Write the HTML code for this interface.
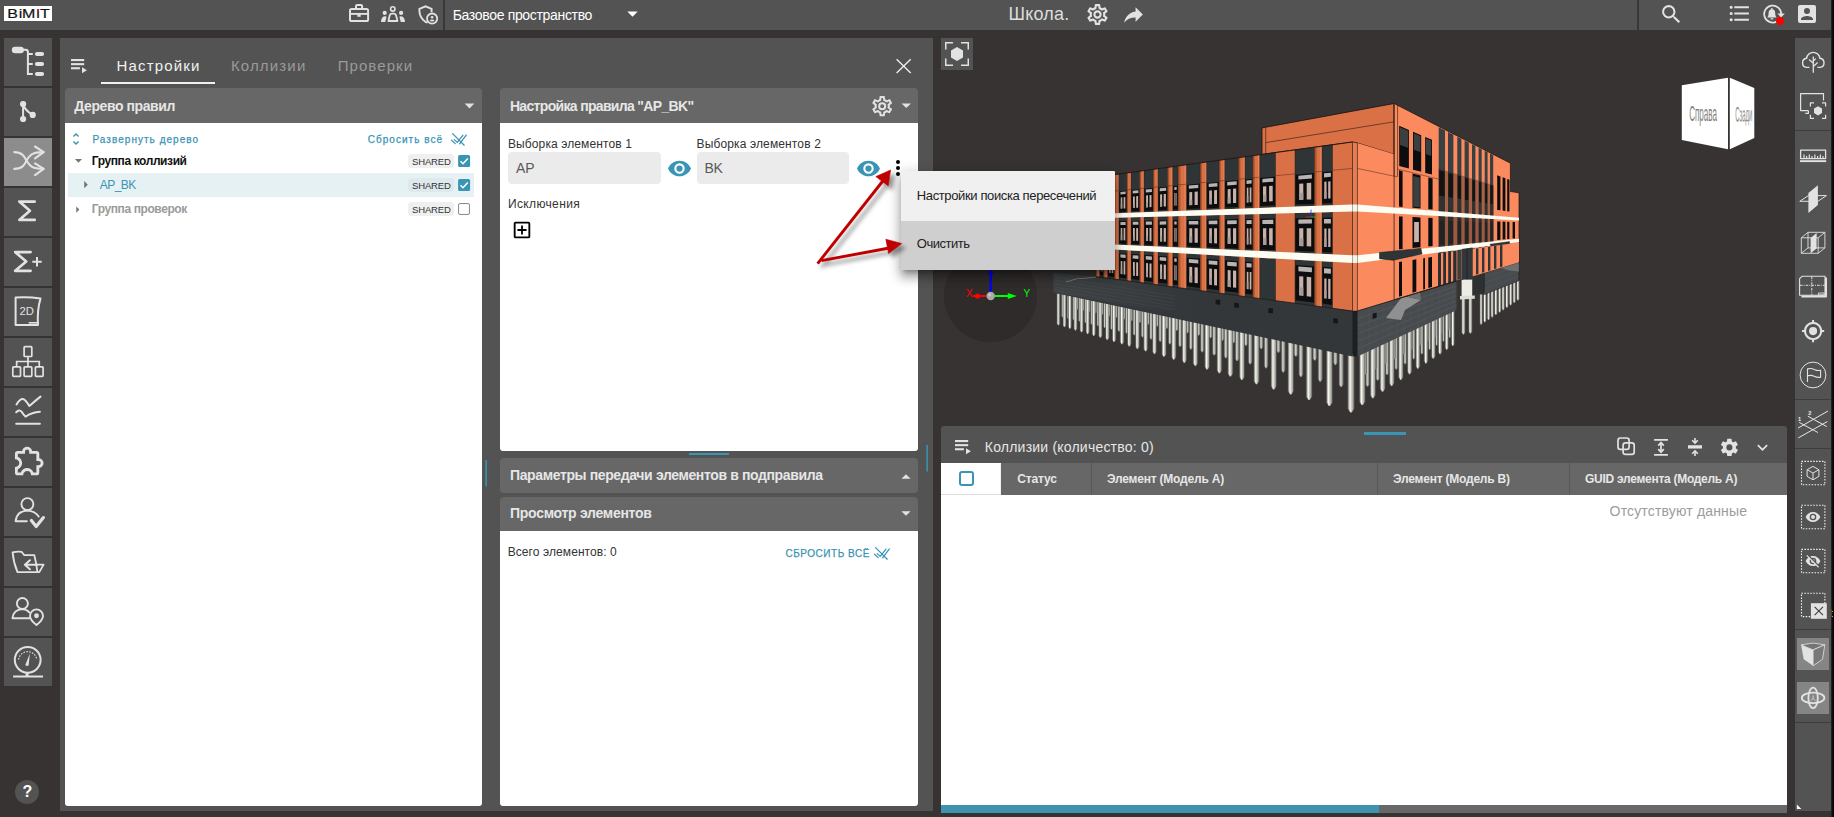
<!DOCTYPE html>
<html lang="ru"><head><meta charset="utf-8"><title>BIMIT</title>
<style>
html,body{margin:0;padding:0;overflow:hidden}
body{width:1834px;height:817px;overflow:hidden;background:#373333;position:relative;
font-family:"Liberation Sans",sans-serif;}
.t{position:absolute;white-space:pre;line-height:1}
.i{position:absolute;display:block;overflow:visible}
</style></head><body>
<div style="position:absolute;left:0px;top:0px;width:1831px;height:30px;background:#535353;"></div>
<div style="position:absolute;left:443px;top:0px;width:2px;height:30px;background:#3b3737;"></div>
<div style="position:absolute;left:1637px;top:0px;width:2px;height:30px;background:#3b3737;"></div>
<div style="position:absolute;left:4px;top:6px;width:48px;height:15px;background:#ffffff;"></div>
<svg class="i" style="left:4px;top:6px" width="48" height="15" viewBox="4 6 48 15"><g transform="scale(1.27,1)"><text x="5.62 14.87 17.35 28.65 31.59" y="18.2" font-size="12.6" font-weight="400" fill="#141414" stroke="#141414" stroke-width="0.2" font-family="Liberation Sans, sans-serif">BiMiT</text></g></svg>
<div style="position:absolute;left:37.0px;top:8.7px;width:2.4px;height:2.2px;background:#ff1010;"></div>
<svg class="i" style="left:346px;top:2px" width="26" height="23" viewBox="346 2 26 23" fill="none" stroke="#e2e2e2" stroke-width="2">
<rect x="350" y="9.1" width="18.1" height="12" rx="1.7"/><path d="M356,8.6 V6.3 Q356,5.1 357.2,5.1 H360.9 Q362.1,5.1 362.1,6.3 V8.6"/>
<path d="M350,13.9 H368.1" stroke-width="1.9"/><rect x="357.4" y="14.1" width="3.3" height="2.7" fill="#e2e2e2" stroke="none"/></svg>
<svg class="i" style="left:379px;top:4px" width="28" height="20" viewBox="379 4 28 20" fill="#e2e2e2" stroke="none">
<circle cx="392.8" cy="8.9" r="2.2" fill="none" stroke="#e2e2e2" stroke-width="1.6"/>
<path d="M388.4,21 L389.7,15.4 Q390.3,13.7 392,13.7 H393.8 Q395.5,13.7 396.1,15.4 L397.5,21 Z" fill="none" stroke="#e2e2e2" stroke-width="1.8" stroke-linejoin="round"/>
<circle cx="384.7" cy="12.9" r="2.1"/><circle cx="401.1" cy="12.9" r="2.1"/>
<path d="M381,21.9 Q381.2,16.2 385.4,16.2 Q386.8,16.2 386.4,17.4 L385.2,21.9 Z"/>
<path d="M405,21.9 Q404.8,16.2 400.4,16.2 Q399.2,16.2 399.6,17.4 L400.8,21.9 Z"/></svg>
<svg class="i" style="left:415px;top:3px" width="26" height="24" viewBox="415 3 26 24" fill="none" stroke="#e2e2e2" stroke-width="1.9">
<path d="M427.6,22.3 Q426.6,22.4 425.4,21.8 Q419.4,17.8 419.4,10.6 V8.9 L425.6,6.3 L431.6,8.9 V12.2"/>
<circle cx="432.1" cy="18.6" r="5.1" stroke-width="1.8"/>
<circle cx="432.1" cy="17.2" r="1.3" fill="#e2e2e2" stroke="none"/><ellipse cx="432.1" cy="20.5" rx="2.2" ry="0.9" fill="#e2e2e2" stroke="none"/></svg>
<svg class="i" style="left:620.2px;top:0.6px" width="25" height="25" viewBox="0 0 24 24" fill="#ffffff" ><path d="M7,10L12,15L17,10H7Z"/></svg>
<svg class="i" style="left:1085px;top:1.6px" width="25" height="25" viewBox="0 0 24 24" fill="#e2e2e2" ><path d="M12,8A4,4 0 0,1 16,12A4,4 0 0,1 12,16A4,4 0 0,1 8,12A4,4 0 0,1 12,8M12,10A2,2 0 0,0 10,12A2,2 0 0,0 12,14A2,2 0 0,0 14,12A2,2 0 0,0 12,10M10,22C9.75,22 9.54,21.82 9.5,21.58L9.13,18.93C8.5,18.68 7.96,18.34 7.44,17.94L4.95,18.95C4.73,19.03 4.46,18.95 4.34,18.73L2.34,15.27C2.21,15.05 2.27,14.78 2.46,14.63L4.57,12.97L4.5,12L4.57,11L2.46,9.37C2.27,9.22 2.21,8.95 2.34,8.73L4.34,5.27C4.46,5.05 4.73,4.96 4.95,5.05L7.44,6.05C7.96,5.66 8.5,5.32 9.13,5.07L9.5,2.42C9.54,2.18 9.75,2 10,2H14C14.25,2 14.46,2.18 14.5,2.42L14.87,5.07C15.5,5.32 16.04,5.66 16.56,6.05L19.05,5.05C19.27,4.96 19.54,5.05 19.66,5.27L21.66,8.73C21.79,8.95 21.73,9.22 21.54,9.37L19.43,11L19.5,12L19.43,13L21.54,14.63C21.73,14.78 21.79,15.05 21.66,15.27L19.66,18.73C19.54,18.95 19.27,19.04 19.05,18.95L16.56,17.95C16.04,18.34 15.5,18.68 14.87,18.93L14.5,21.58C14.46,21.82 14.25,22 14,22H10M11.25,4L10.88,6.61C9.68,6.86 8.62,7.5 7.85,8.39L5.44,7.35L4.69,8.65L6.8,10.2C6.4,11.37 6.4,12.64 6.8,13.8L4.68,15.36L5.43,16.66L7.86,15.62C8.63,16.5 9.68,17.14 10.87,17.38L11.24,20H12.76L13.13,17.39C14.32,17.14 15.37,16.5 16.14,15.62L18.57,16.66L19.32,15.36L17.2,13.81C17.6,12.64 17.6,11.37 17.2,10.2L19.31,8.65L18.56,7.35L16.15,8.39C15.38,7.5 14.32,6.86 13.12,6.62L12.75,4H11.25Z"/></svg>
<svg class="i" style="left:1120.9px;top:1.8px" width="25" height="25" viewBox="0 0 24 24" fill="#e2e2e2" ><path d="M21,12L14,5V9C7,10 4,15 3,20C5.5,16.5 9,14.9 14,14.9V19L21,12Z"/></svg>
<svg class="i" style="left:1659px;top:2.3px" width="24.7" height="24.7" viewBox="0 0 24 24" fill="#e2e2e2" ><path d="M9.5,3A6.5,6.5 0 0,1 16,9.5C16,11.11 15.41,12.59 14.44,13.73L14.71,14H15.5L20.5,19L19,20.5L14,15.5V14.71L13.73,14.44C12.59,15.41 11.11,16 9.5,16A6.5,6.5 0 0,1 3,9.5A6.5,6.5 0 0,1 9.5,3M9.5,5C7,5 5,7 5,9.5C5,12 7,14 9.5,14C12,14 14,12 14,9.5C14,7 12,5 9.5,5Z"/></svg>
<svg class="i" style="left:1727.1px;top:1.1px" width="25" height="25" viewBox="0 0 24 24" fill="#e2e2e2" ><path d="M7,5H21V7H7V5M7,13V11H21V13H7M4,4.5A1.5,1.5 0 0,1 5.5,6A1.5,1.5 0 0,1 4,7.5A1.5,1.5 0 0,1 2.5,6A1.5,1.5 0 0,1 4,4.5M4,10.5A1.5,1.5 0 0,1 5.5,12A1.5,1.5 0 0,1 4,13.5A1.5,1.5 0 0,1 2.5,12A1.5,1.5 0 0,1 4,10.5M7,19V17H21V19H7M4,16.5A1.5,1.5 0 0,1 5.5,18A1.5,1.5 0 0,1 4,19.5A1.5,1.5 0 0,1 2.5,18A1.5,1.5 0 0,1 4,16.5Z"/></svg>
<svg class="i" style="left:1761px;top:3px" width="26" height="23" viewBox="1761 3 26 23" fill="none" stroke="#e2e2e2" stroke-width="1.8">
<path d="M1781.2,14.1 A8.5,8.5 0 1 0 1776.6,21.6"/>
<path d="M1777.4,13.4 H1784.8 L1781.1,17.6 Z" fill="#e2e2e2" stroke="none"/>
<path d="M1767.2,17.4 Q1768.6,16.2 1768.6,13.2 Q1768.6,9.2 1771.9,9.2 Q1775.2,9.2 1775.2,13.2 Q1775.2,16.2 1776.6,17.4 Z" fill="#e2e2e2" stroke="none"/>
<path d="M1770.6,18.8 H1773.2" stroke-width="1.3"/><circle cx="1771.9" cy="8.8" r="0.9" fill="#e2e2e2" stroke="none"/></svg>
<div style="position:absolute;left:1775.9px;top:16.9px;width:8.2px;height:8.2px;border-radius:50%;background:#ff0000"></div>
<svg class="i" style="left:1795px;top:1.9px" width="24" height="24" viewBox="0 0 24 24" fill="#e2e2e2" ><path d="M6,17C6,15 10,13.9 12,13.9C14,13.9 18,15 18,17V18H6M15,9A3,3 0 0,1 12,12A3,3 0 0,1 9,9A3,3 0 0,1 12,6A3,3 0 0,1 15,9M3,5V19A2,2 0 0,0 5,21H19A2,2 0 0,0 21,19V5A2,2 0 0,0 19,3H5C3.89,3 3,3.9 3,5Z"/></svg>
<div style="position:absolute;left:4px;top:38px;width:48px;height:48px;background:#535353"><svg width="48" height="48" viewBox="0 0 48 48" style="display:block"><rect x="7.8" y="8.8" width="12.1" height="6.4" rx="3.2" fill="#e2e2e2"/>
<path d="M19,11.8 H21.6 Q23.9,11.8 23.9,14.2 V36 H28.8 M23.9,16 H28.8 M23.9,26 H28.8" fill="none" stroke="#e2e2e2" stroke-width="2"/>
<rect x="30.9" y="14" width="9.2" height="4.1" rx="2.05" fill="#e2e2e2"/><rect x="30.9" y="24" width="9.2" height="4.1" rx="2.05" fill="#e2e2e2"/><rect x="30.9" y="34" width="9.2" height="4.1" rx="2.05" fill="#e2e2e2"/></svg></div>
<div style="position:absolute;left:4px;top:88px;width:48px;height:48px;background:#535353"><svg width="48" height="48" viewBox="0 0 48 48" style="display:block"><circle cx="19.1" cy="16.1" r="3.1" fill="#e2e2e2"/><circle cx="19.1" cy="31" r="3.1" fill="#e2e2e2"/><circle cx="28.7" cy="26.9" r="3.1" fill="#e2e2e2"/>
<path d="M19.1,16.1 V31 M19.1,16.1 Q21,22.5 28.7,26.9" fill="none" stroke="#e2e2e2" stroke-width="2"/></svg></div>
<div style="position:absolute;left:4px;top:138px;width:48px;height:48px;background:#8c8c8c"><svg width="48" height="48" viewBox="0 0 48 48" style="display:block"><g fill="none" stroke="#e2e2e2" stroke-width="2.1" stroke-linecap="round" stroke-linejoin="round">
<path d="M10.3,14.1 C20,14.1 21,21 23.4,24 C26,28 28,30.9 39.4,30.9"/>
<path d="M10.3,30.9 C20,30.9 21,25 23.4,21 C26,17 28,14.1 39.4,14.1"/>
<path d="M31,8.5 L39.7,14.1 L31,20.3"/><path d="M31,25.3 L39.7,30.9 L31,37.2"/></g></svg></div>
<div style="position:absolute;left:4px;top:188px;width:48px;height:48px;background:#535353"><svg width="48" height="48" viewBox="0 0 48 48" style="display:block"><path d="M30.7,13.6 H15.3 L25.9,22.8 L15.3,31.9 H30.7" fill="none" stroke="#e2e2e2" stroke-width="2.7" stroke-linecap="round" stroke-linejoin="round"/></svg></div>
<div style="position:absolute;left:4px;top:238px;width:48px;height:48px;background:#535353"><svg width="48" height="48" viewBox="0 0 48 48" style="display:block"><path d="M26.6,14.1 H11.2 L22.2,23.5 L11.2,32.8 H26.6" fill="none" stroke="#e2e2e2" stroke-width="2.7" stroke-linecap="round" stroke-linejoin="round"/>
<path d="M28.3,23.7 H37.7 M33,19 V28.4" fill="none" stroke="#e2e2e2" stroke-width="2"/></svg></div>
<div style="position:absolute;left:4px;top:288px;width:48px;height:48px;background:#535353"><svg width="48" height="48" viewBox="0 0 48 48" style="display:block"><path d="M11.6,9.6 Q24,8.6 36.5,10.6 Q33,22 34,36.9 H11.6 Z" fill="none" stroke="#e2e2e2" stroke-width="2" stroke-linejoin="round"/>
<path d="M24.7,34.8 H33.4" stroke="#e2e2e2" stroke-width="1.6"/>
<text x="15.6" y="26.6" font-size="11.5" fill="#e2e2e2" font-family="Liberation Sans, sans-serif" textLength="14.4" lengthAdjust="spacingAndGlyphs">2D</text></svg></div>
<div style="position:absolute;left:4px;top:338px;width:48px;height:48px;background:#535353"><svg width="48" height="48" viewBox="0 0 48 48" style="display:block"><g fill="none" stroke="#e2e2e2" stroke-width="1.7"><rect x="20.1" y="8.7" width="7.7" height="9.8" rx="0.8"/>
<rect x="8.8" y="28.8" width="7.7" height="9.6" rx="0.8"/><rect x="20.1" y="28.8" width="7.7" height="9.6" rx="0.8"/><rect x="31.4" y="28.8" width="7.7" height="9.6" rx="0.8"/>
<path d="M23.95,18.5 V28.8 M12.65,28.8 V23.5 H35.25 V28.8"/></g></svg></div>
<div style="position:absolute;left:4px;top:388px;width:48px;height:48px;background:#535353"><svg width="48" height="48" viewBox="0 0 48 48" style="display:block"><g fill="none" stroke="#e2e2e2" stroke-width="2" stroke-linecap="round" stroke-linejoin="round">
<path d="M12.5,16.5 Q16.5,10 19.5,11.2 Q22,12.5 25.3,18 Q31,13 36.5,8.6"/>
<path d="M12.2,24.2 Q15.3,21 17.5,23.6 Q19.5,27 21.6,28.6 Q28,24.5 35.9,23.8"/>
<path d="M12.2,35.7 H35.9"/></g></svg></div>
<div style="position:absolute;left:4px;top:438px;width:48px;height:48px;background:#535353"><svg width="48" height="48" viewBox="0 0 48 48" style="display:block"><g transform="translate(8.1,5.8) scale(1.43)"><path d="M22,13.5C22,15.26 20.7,16.72 19,16.96V20A2,2 0 0,1 17,22H13.2V21.7A2.7,2.7 0 0,0 10.5,19C9,19 7.8,20.21 7.8,21.7V22H4A2,2 0 0,1 2,20V16.2H2.3C3.79,16.2 5,15 5,13.5C5,12 3.79,10.8 2.3,10.8H2V7A2,2 0 0,1 4,5H7.04C7.28,3.3 8.74,2 10.5,2C12.26,2 13.72,3.3 13.96,5H17A2,2 0 0,1 19,7V10.04C20.7,10.28 22,11.74 22,13.5M17,15H18.5A1.5,1.5 0 0,0 20,13.5A1.5,1.5 0 0,0 18.5,12H17V7H12V5.5A1.5,1.5 0 0,0 10.5,4A1.5,1.5 0 0,0 9,5.5V7H4V9.12C5.76,9.8 7,11.5 7,13.5C7,15.5 5.75,17.2 4,17.88V20H6.12C6.8,18.25 8.5,17 10.5,17C12.5,17 14.2,18.25 14.88,20H17V15Z" fill="#e2e2e2"/></g></svg></div>
<div style="position:absolute;left:4px;top:488px;width:48px;height:48px;background:#535353"><svg width="48" height="48" viewBox="0 0 48 48" style="display:block"><g fill="none" stroke="#e2e2e2" stroke-width="1.9" stroke-linecap="round" stroke-linejoin="round">
<circle cx="23.4" cy="16.1" r="6"/><path d="M22.8,33.3 H11.6 Q12.6,23 23.4,22.6 Q31,22.8 34.7,28.6"/>
<path d="M27.4,32.4 L32.2,38.6 L39.4,29.6" stroke-width="3.2"/></g></svg></div>
<div style="position:absolute;left:4px;top:538px;width:48px;height:48px;background:#535353"><svg width="48" height="48" viewBox="0 0 48 48" style="display:block"><g fill="none" stroke="#e2e2e2" stroke-width="1.8" stroke-linecap="round" stroke-linejoin="round">
<path d="M8.6,14.3 Q13,13.4 17.6,13.8 L20.3,17.2 H30.3 Q32.4,25 33.4,34.1 H13.5 Q9.6,25 8.6,14.3 Z"/>
<path d="M31.3,26.6 H39.6 L35.3,34.1 H33.4"/>
<path d="M33.2,26.8 H21.2 M25.9,22.2 L20.9,26.8 L25.9,31.3" stroke-width="2"/></g></svg></div>
<div style="position:absolute;left:4px;top:588px;width:48px;height:48px;background:#535353"><svg width="48" height="48" viewBox="0 0 48 48" style="display:block"><g fill="none" stroke="#e2e2e2" stroke-width="1.9" stroke-linecap="round" stroke-linejoin="round">
<circle cx="18.4" cy="15.5" r="5.5"/><path d="M25.6,30.2 H8.5 Q9.4,21.5 18.4,21.1 Q22.6,21.2 25.3,24.4"/>
<path d="M32.5,37.1 Q26,31.6 26,27.9 A6.5,6.5 0 0 1 39,27.9 Q39,31.6 32.5,37.1 Z"/><circle cx="32.5" cy="27.7" r="1.5" fill="#e2e2e2"/></g></svg></div>
<div style="position:absolute;left:4px;top:638px;width:48px;height:48px;background:#535353"><svg width="48" height="48" viewBox="0 0 48 48" style="display:block"><g fill="none" stroke="#e2e2e2" stroke-width="2">
<circle cx="23.7" cy="21.8" r="12.9"/><path d="M9.1,38.6 H39 M23.1,34.7 V38.6" /><path d="M23.1,34.6 V38.6" stroke-width="3"/>
<path d="M14.6,21.5 A9.2,9.2 0 0 1 32.8,21.5" stroke-width="1.1" stroke-dasharray="1.6 1.3"/>
<path d="M25.9,15.6 L24.6,27.4 Q22.8,28.6 21.3,26.9 Z" fill="#e2e2e2" stroke="none"/></g></svg></div>
<div style="position:absolute;left:15px;top:779.5px;width:24px;height:24px;border-radius:50%;background:#535353"></div>
<span class="t" style="left:22.4px;top:783.5px;font-size:16px;font-weight:700;color:#ffffff">?</span>
<div style="position:absolute;left:60px;top:38px;width:873px;height:773px;background:#535353;"></div>
<svg class="i" style="left:71px;top:58.9px" width="17" height="15" viewBox="0 0 17 15" fill="#e2e2e2"><rect x="0" y="0" width="13.2" height="2.1"/><rect x="0" y="4.1" width="13.2" height="2.1"/><rect x="0" y="8.2" width="8.9" height="2.1"/><path d="M11,8.3 L15.9,11.3 L11,14.2 Z"/></svg>
<div style="position:absolute;left:101px;top:82px;width:114px;height:2px;background:#f0f0f0;"></div>
<svg class="i" style="left:894px;top:57px" width="19" height="18" viewBox="894 57 19 18" fill="none" stroke="#efefef" stroke-width="1.35"><path d="M896.6,59.3 L910.7,72.9 M910.7,59.3 L896.6,72.9"/></svg>
<div style="position:absolute;left:65px;top:88px;width:417px;height:35px;background:#676767;border-radius:4px 4px 0 0"></div>
<div style="position:absolute;left:65px;top:123px;width:417px;height:683px;background:#ffffff;border-radius:0 0 3px 3px"></div>
<svg class="i" style="left:458.3px;top:93.6px" width="23" height="23" viewBox="0 0 24 24" fill="#e2e2e2" ><path d="M7,10L12,15L17,10H7Z"/></svg>
<svg class="i" style="left:67.6px;top:131.2px" width="16" height="16" viewBox="0 0 24 24" fill="#3a94b3" ><path d="M12,18.17L8.83,15L7.41,16.41L12,21L16.59,16.41L15.17,15M12,5.83L15.17,9L16.58,7.59L12,3L7.41,7.59L8.83,9L12,5.83Z"/></svg>
<svg class="i" style="left:450.6px;top:132.8px" width="16" height="13" viewBox="0 0 16 13" fill="none" stroke="#3a94b3" stroke-width="1.25" stroke-linecap="round"><path d="M0.6,7.2 L4.2,10.6 M3.3,6.6 L6.2,9.4 M8.6,10.8 L15.2,2 M6.4,9.2 L12,2.2"/><path d="M1.6,0.6 L13.2,12.2"/></svg>
<div style="position:absolute;left:68px;top:173px;width:406px;height:24px;background:#e6f1f4;"></div>
<svg class="i" style="left:69.6px;top:152.4px" width="17" height="17" viewBox="0 0 24 24" fill="#757575" ><path d="M7,10L12,15L17,10H7Z"/></svg>
<svg class="i" style="left:77.1px;top:176.4px" width="17.3" height="17.3" viewBox="0 0 24 24" fill="#757575" ><path d="M10,17L15,12L10,7V17Z"/></svg>
<svg class="i" style="left:70.3px;top:201.6px" width="15" height="15" viewBox="0 0 24 24" fill="#757575" ><path d="M10,17L15,12L10,7V17Z"/></svg>
<div style="position:absolute;left:408px;top:154px;width:46px;height:14px;background:#efefef;border-radius:4px"></div>
<div style="position:absolute;left:408px;top:178px;width:46px;height:14px;background:#dde9ec;border-radius:4px"></div>
<div style="position:absolute;left:408px;top:202px;width:46px;height:14px;background:#efefef;border-radius:4px"></div>
<svg class="i" style="left:458.3px;top:155px" width="12.2" height="12" viewBox="0 0 12 12"><rect width="12" height="12" rx="1.6" fill="#3a94b3"/><path d="M2.4,6.2 L4.9,8.7 L9.7,3.4" fill="none" stroke="#fff" stroke-width="1.5"/></svg>
<svg class="i" style="left:458.3px;top:179px" width="12.2" height="12" viewBox="0 0 12 12"><rect width="12" height="12" rx="1.6" fill="#3a94b3"/><path d="M2.4,6.2 L4.9,8.7 L9.7,3.4" fill="none" stroke="#fff" stroke-width="1.5"/></svg>
<div style="position:absolute;left:458.3px;top:203px;width:10.2px;height:10px;background:#ffffff;border:1px solid #8f8f8f;border-radius:2px;box-shadow:inset 0 0 1px #bbb"></div>
<div style="position:absolute;left:500px;top:88px;width:418px;height:35px;background:#676767;border-radius:4px 4px 0 0"></div>
<div style="position:absolute;left:500px;top:123px;width:418px;height:328px;background:#ffffff;border-radius:0 0 3px 3px"></div>
<svg class="i" style="left:870px;top:94px" width="24.4" height="24.4" viewBox="0 0 24 24" fill="#e2e2e2" ><path d="M12,8A4,4 0 0,1 16,12A4,4 0 0,1 12,16A4,4 0 0,1 8,12A4,4 0 0,1 12,8M12,10A2,2 0 0,0 10,12A2,2 0 0,0 12,14A2,2 0 0,0 14,12A2,2 0 0,0 12,10M10,22C9.75,22 9.54,21.82 9.5,21.58L9.13,18.93C8.5,18.68 7.96,18.34 7.44,17.94L4.95,18.95C4.73,19.03 4.46,18.95 4.34,18.73L2.34,15.27C2.21,15.05 2.27,14.78 2.46,14.63L4.57,12.97L4.5,12L4.57,11L2.46,9.37C2.27,9.22 2.21,8.95 2.34,8.73L4.34,5.27C4.46,5.05 4.73,4.96 4.95,5.05L7.44,6.05C7.96,5.66 8.5,5.32 9.13,5.07L9.5,2.42C9.54,2.18 9.75,2 10,2H14C14.25,2 14.46,2.18 14.5,2.42L14.87,5.07C15.5,5.32 16.04,5.66 16.56,6.05L19.05,5.05C19.27,4.96 19.54,5.05 19.66,5.27L21.66,8.73C21.79,8.95 21.73,9.22 21.54,9.37L19.43,11L19.5,12L19.43,13L21.54,14.63C21.73,14.78 21.79,15.05 21.66,15.27L19.66,18.73C19.54,18.95 19.27,19.04 19.05,18.95L16.56,17.95C16.04,18.34 15.5,18.68 14.87,18.93L14.5,21.58C14.46,21.82 14.25,22 14,22H10M11.25,4L10.88,6.61C9.68,6.86 8.62,7.5 7.85,8.39L5.44,7.35L4.69,8.65L6.8,10.2C6.4,11.37 6.4,12.64 6.8,13.8L4.68,15.36L5.43,16.66L7.86,15.62C8.63,16.5 9.68,17.14 10.87,17.38L11.24,20H12.76L13.13,17.39C14.32,17.14 15.37,16.5 16.14,15.62L18.57,16.66L19.32,15.36L17.2,13.81C17.6,12.64 17.6,11.37 17.2,10.2L19.31,8.65L18.56,7.35L16.15,8.39C15.38,7.5 14.32,6.86 13.12,6.62L12.75,4H11.25Z"/></svg>
<svg class="i" style="left:894.9px;top:93.8px" width="22.6" height="22.6" viewBox="0 0 24 24" fill="#e2e2e2" ><path d="M7,10L12,15L17,10H7Z"/></svg>
<div style="position:absolute;left:508px;top:152px;width:153px;height:32px;background:#ebebeb;border-radius:4px"></div>
<div style="position:absolute;left:697px;top:152px;width:152px;height:32px;background:#ebebeb;border-radius:4px"></div>
<svg class="i" style="left:666.86px;top:155.6px" width="25" height="25" viewBox="0 0 24 24" fill="#3a94b3" ><path d="M12,9A3,3 0 0,0 9,12A3,3 0 0,0 12,15A3,3 0 0,0 15,12A3,3 0 0,0 12,9M12,17A5,5 0 0,1 7,12A5,5 0 0,1 12,7A5,5 0 0,1 17,12A5,5 0 0,1 12,17M12,4.5C7,4.5 2.73,7.61 1,12C2.73,16.39 7,19.5 12,19.5C17,19.5 21.27,16.39 23,12C21.27,7.61 17,4.5 12,4.5Z"/></svg>
<svg class="i" style="left:855.7px;top:155.6px" width="25" height="25" viewBox="0 0 24 24" fill="#3a94b3" ><path d="M12,9A3,3 0 0,0 9,12A3,3 0 0,0 12,15A3,3 0 0,0 15,12A3,3 0 0,0 12,9M12,17A5,5 0 0,1 7,12A5,5 0 0,1 12,7A5,5 0 0,1 17,12A5,5 0 0,1 12,17M12,4.5C7,4.5 2.73,7.61 1,12C2.73,16.39 7,19.5 12,19.5C17,19.5 21.27,16.39 23,12C21.27,7.61 17,4.5 12,4.5Z"/></svg>
<svg class="i" style="left:885.5px;top:156px" width="24" height="24" viewBox="0 0 24 24" fill="#000000" ><path d="M12,16A2,2 0 0,1 14,18A2,2 0 0,1 12,20A2,2 0 0,1 10,18A2,2 0 0,1 12,16M12,10A2,2 0 0,1 14,12A2,2 0 0,1 12,14A2,2 0 0,1 10,12A2,2 0 0,1 12,10M12,4A2,2 0 0,1 14,6A2,2 0 0,1 12,8A2,2 0 0,1 10,6A2,2 0 0,1 12,4Z"/></svg>
<svg class="i" style="left:510.95px;top:218.6px" width="22" height="22" viewBox="0 0 24 24" fill="#000000" ><path d="M19,19V5H5V19H19M19,3A2,2 0 0,1 21,5V19A2,2 0 0,1 19,21H5A2,2 0 0,1 3,19V5C3,3.89 3.9,3 5,3H19M11,7H13V11H17V13H13V17H11V13H7V11H11V7Z"/></svg>
<div style="position:absolute;left:689.4px;top:452.6px;width:39.4px;height:2px;background:#3a94b3;"></div>
<div style="position:absolute;left:500px;top:458px;width:418px;height:35px;background:#676767;border-radius:4px"></div>
<svg class="i" style="left:894.5px;top:464.7px" width="22" height="22" viewBox="0 0 24 24" fill="#e2e2e2" ><path d="M7,15L12,10L17,15H7Z"/></svg>
<div style="position:absolute;left:500px;top:496.5px;width:418px;height:35px;background:#676767;border-radius:4px 4px 0 0"></div>
<div style="position:absolute;left:500px;top:531px;width:418px;height:275px;background:#ffffff;border-radius:0 0 3px 3px"></div>
<svg class="i" style="left:894.5px;top:502.3px" width="22" height="22" viewBox="0 0 24 24" fill="#e2e2e2" ><path d="M7,10L12,15L17,10H7Z"/></svg>
<svg class="i" style="left:874.2px;top:547.2px" width="16" height="13" viewBox="0 0 16 13" fill="none" stroke="#3a94b3" stroke-width="1.25" stroke-linecap="round"><path d="M0.6,7.2 L4.2,10.6 M3.3,6.6 L6.2,9.4 M8.6,10.8 L15.2,2 M6.4,9.2 L12,2.2"/><path d="M1.6,0.6 L13.2,12.2"/></svg>
<svg class="i" style="left:484px;top:459px" width="4" height="29" viewBox="484 459 4 29"><rect x="485.4" y="460" width="1.5" height="26.5" fill="#3a94b3"/></svg>
<svg class="i" style="left:925px;top:444px" width="5" height="29" viewBox="925 444 5 29"><rect x="926.4" y="445" width="1.5" height="26.5" fill="#3a94b3"/></svg>
<svg class="i" style="left:933px;top:38px" width="862" height="388" viewBox="933 38 862 388"><defs><linearGradient id="bg1" gradientUnits="userSpaceOnUse" x1="1053" x2="1190" y1="0" y2="0"><stop offset="0" stop-color="#3f4345"/><stop offset="1" stop-color="#33373a"/></linearGradient><linearGradient id="pg" x1="0" x2="1" y1="0" y2="0"><stop offset="0" stop-color="#707270"/><stop offset=".18" stop-color="#bcbdb5"/><stop offset=".36" stop-color="#f8f8ee"/><stop offset=".55" stop-color="#cdcec6"/><stop offset=".82" stop-color="#a3a49d"/><stop offset="1" stop-color="#626462"/></linearGradient>
<linearGradient id="pg2" x1="0" x2="1" y1="0" y2="0"><stop offset="0" stop-color="#747674"/><stop offset=".35" stop-color="#cfd0c8"/><stop offset=".7" stop-color="#a9aaa3"/><stop offset="1" stop-color="#626462"/></linearGradient></defs><path d="M1061.4,294.3 V316.0 L1062.2,317.3 L1062.7,317.3 L1063.5,316.0 V294.3 Z" fill="url(#pg2)" stroke="#5e605e" stroke-width="0.35"/><path d="M1067.1,295.5 V317.4 L1067.9,318.8 L1068.5,318.8 L1069.3,317.4 V295.5 Z" fill="url(#pg2)" stroke="#5e605e" stroke-width="0.35"/><path d="M1072.6,296.7 V318.8 L1073.4,320.1 L1074.0,320.1 L1074.8,318.8 V296.7 Z" fill="url(#pg2)" stroke="#5e605e" stroke-width="0.35"/><path d="M1078.4,297.9 V320.2 L1079.3,321.6 L1079.8,321.6 L1080.7,320.2 V297.9 Z" fill="url(#pg2)" stroke="#5e605e" stroke-width="0.35"/><path d="M1084.5,299.1 V321.7 L1085.4,323.1 L1085.9,323.1 L1086.8,321.7 V299.1 Z" fill="url(#pg2)" stroke="#5e605e" stroke-width="0.35"/><path d="M1090.6,300.4 V323.2 L1091.5,324.6 L1092.0,324.6 L1092.9,323.2 V300.4 Z" fill="url(#pg2)" stroke="#5e605e" stroke-width="0.35"/><path d="M1096.9,301.7 V324.7 L1097.8,326.2 L1098.4,326.2 L1099.3,324.7 V301.7 Z" fill="url(#pg2)" stroke="#5e605e" stroke-width="0.35"/><path d="M1103.6,303.1 V326.4 L1104.6,327.9 L1105.1,327.9 L1106.1,326.4 V303.1 Z" fill="url(#pg2)" stroke="#5e605e" stroke-width="0.35"/><path d="M1110.4,304.5 V328.1 L1111.4,329.6 L1112.0,329.6 L1113.0,328.1 V304.5 Z" fill="url(#pg2)" stroke="#5e605e" stroke-width="0.35"/><path d="M1117.7,306.1 V329.9 L1118.7,331.5 L1119.4,331.5 L1120.4,329.9 V306.1 Z" fill="url(#pg2)" stroke="#5e605e" stroke-width="0.35"/><path d="M1125.3,307.6 V331.7 L1126.3,333.4 L1127.0,333.4 L1128.0,331.7 V307.6 Z" fill="url(#pg2)" stroke="#5e605e" stroke-width="0.35"/><path d="M1133.0,309.2 V333.6 L1134.0,335.3 L1134.7,335.3 L1135.7,333.6 V309.2 Z" fill="url(#pg2)" stroke="#5e605e" stroke-width="0.35"/><path d="M1141.1,310.9 V335.6 L1142.2,337.3 L1142.9,337.3 L1144.0,335.6 V310.9 Z" fill="url(#pg2)" stroke="#5e605e" stroke-width="0.35"/><path d="M1149.7,312.7 V337.7 L1150.8,339.5 L1151.4,339.5 L1152.5,337.7 V312.7 Z" fill="url(#pg2)" stroke="#5e605e" stroke-width="0.35"/><path d="M1158.8,314.6 V339.9 L1159.9,341.8 L1160.6,341.8 L1161.7,339.9 V314.6 Z" fill="url(#pg2)" stroke="#5e605e" stroke-width="0.35"/><path d="M1168.4,316.6 V342.3 L1169.5,344.2 L1170.3,344.2 L1171.4,342.3 V316.6 Z" fill="url(#pg2)" stroke="#5e605e" stroke-width="0.35"/><path d="M1178.5,318.7 V344.8 L1179.7,346.7 L1180.5,346.7 L1181.7,344.8 V318.7 Z" fill="url(#pg2)" stroke="#5e605e" stroke-width="0.35"/><path d="M1189.3,320.9 V347.4 L1190.5,349.4 L1191.3,349.4 L1192.5,347.4 V320.9 Z" fill="url(#pg2)" stroke="#5e605e" stroke-width="0.35"/><path d="M1200.6,323.3 V350.2 L1201.9,352.3 L1202.6,352.3 L1203.9,350.2 V323.3 Z" fill="url(#pg2)" stroke="#5e605e" stroke-width="0.35"/><path d="M1212.5,325.8 V353.2 L1213.8,355.3 L1214.7,355.3 L1216.0,353.2 V325.8 Z" fill="url(#pg2)" stroke="#5e605e" stroke-width="0.35"/><path d="M1224.1,328.2 V356.0 L1225.5,358.2 L1226.3,358.2 L1227.7,356.0 V328.2 Z" fill="url(#pg2)" stroke="#5e605e" stroke-width="0.35"/><path d="M1235.3,330.5 V358.8 L1236.7,361.0 L1237.6,361.0 L1239.0,358.8 V330.5 Z" fill="url(#pg2)" stroke="#5e605e" stroke-width="0.35"/><path d="M1248.3,333.2 V362.0 L1249.8,364.3 L1250.6,364.3 L1252.1,362.0 V333.2 Z" fill="url(#pg2)" stroke="#5e605e" stroke-width="0.35"/><path d="M1264.2,336.5 V365.8 L1265.6,368.2 L1266.6,368.2 L1268.0,365.8 V336.5 Z" fill="url(#pg2)" stroke="#5e605e" stroke-width="0.35"/><path d="M1281.3,340.1 V370.0 L1282.8,372.5 L1283.7,372.5 L1285.2,370.0 V340.1 Z" fill="url(#pg2)" stroke="#5e605e" stroke-width="0.35"/><path d="M1298.9,343.7 V374.4 L1300.5,376.9 L1301.4,376.9 L1303.0,374.4 V343.7 Z" fill="url(#pg2)" stroke="#5e605e" stroke-width="0.35"/><path d="M1318.1,347.7 V379.1 L1319.7,381.8 L1320.8,381.8 L1322.4,379.1 V347.7 Z" fill="url(#pg2)" stroke="#5e605e" stroke-width="0.35"/><path d="M1339.0,352.1 V384.2 L1340.7,387.0 L1341.7,387.0 L1343.4,384.2 V352.1 Z" fill="url(#pg2)" stroke="#5e605e" stroke-width="0.35"/><path d="M1365.9,349.6 V384.5 L1367.2,386.6 L1368.0,386.6 L1369.3,384.5 V349.6 Z" fill="url(#pg2)" stroke="#5e605e" stroke-width="0.35"/><path d="M1376.1,344.9 V378.6 L1377.4,380.6 L1378.1,380.6 L1379.4,378.6 V344.9 Z" fill="url(#pg2)" stroke="#5e605e" stroke-width="0.35"/><path d="M1385.6,340.5 V373.1 L1386.8,375.0 L1387.5,375.0 L1388.7,373.1 V340.5 Z" fill="url(#pg2)" stroke="#5e605e" stroke-width="0.35"/><path d="M1394.8,336.3 V367.8 L1395.9,369.6 L1396.6,369.6 L1397.7,367.8 V336.3 Z" fill="url(#pg2)" stroke="#5e605e" stroke-width="0.35"/><path d="M1403.8,332.1 V362.5 L1404.9,364.2 L1405.5,364.2 L1406.6,362.5 V332.1 Z" fill="url(#pg2)" stroke="#5e605e" stroke-width="0.35"/><path d="M1412.5,328.1 V357.5 L1413.4,359.2 L1414.1,359.2 L1415.0,357.5 V328.1 Z" fill="url(#pg2)" stroke="#5e605e" stroke-width="0.35"/><path d="M1420.7,324.3 V352.8 L1421.7,354.3 L1422.2,354.3 L1423.2,352.8 V324.3 Z" fill="url(#pg2)" stroke="#5e605e" stroke-width="0.35"/><path d="M1428.5,320.7 V348.3 L1429.4,349.7 L1429.9,349.7 L1430.8,348.3 V320.7 Z" fill="url(#pg2)" stroke="#5e605e" stroke-width="0.35"/><path d="M1435.6,317.4 V344.1 L1436.4,345.5 L1437.0,345.5 L1437.8,344.1 V317.4 Z" fill="url(#pg2)" stroke="#5e605e" stroke-width="0.35"/><path d="M1442.4,314.2 V340.2 L1443.2,341.5 L1443.7,341.5 L1444.5,340.2 V314.2 Z" fill="url(#pg2)" stroke="#5e605e" stroke-width="0.35"/><path d="M1448.9,311.3 V336.4 L1449.6,337.7 L1450.1,337.7 L1450.8,336.4 V311.3 Z" fill="url(#pg2)" stroke="#5e605e" stroke-width="0.35"/><path d="M1076.1,297.4 V308.0 L1077.0,309.4 L1077.5,309.4 L1078.3,308.0 V297.4 Z" fill="url(#pg2)" stroke="#5e605e" stroke-width="0.35"/><path d="M1082.2,298.7 V309.3 L1083.0,310.7 L1083.6,310.7 L1084.4,309.3 V298.7 Z" fill="url(#pg2)" stroke="#5e605e" stroke-width="0.35"/><path d="M1088.3,299.9 V310.6 L1089.1,312.0 L1089.7,312.0 L1090.5,310.6 V299.9 Z" fill="url(#pg2)" stroke="#5e605e" stroke-width="0.35"/><path d="M1094.5,301.2 V311.9 L1095.4,313.3 L1095.9,313.3 L1096.8,311.9 V301.2 Z" fill="url(#pg2)" stroke="#5e605e" stroke-width="0.35"/><path d="M1101.2,302.6 V313.3 L1102.1,314.8 L1102.6,314.8 L1103.5,313.3 V302.6 Z" fill="url(#pg2)" stroke="#5e605e" stroke-width="0.35"/><path d="M1108.0,304.0 V314.8 L1108.9,316.3 L1109.5,316.3 L1110.4,314.8 V304.0 Z" fill="url(#pg2)" stroke="#5e605e" stroke-width="0.35"/><path d="M1115.1,305.5 V316.3 L1116.0,317.8 L1116.6,317.8 L1117.5,316.3 V305.5 Z" fill="url(#pg2)" stroke="#5e605e" stroke-width="0.35"/><path d="M1122.8,307.1 V317.9 L1123.7,319.5 L1124.3,319.5 L1125.3,317.9 V307.1 Z" fill="url(#pg2)" stroke="#5e605e" stroke-width="0.35"/><path d="M1130.3,308.7 V319.5 L1131.3,321.1 L1131.9,321.1 L1132.8,319.5 V308.7 Z" fill="url(#pg2)" stroke="#5e605e" stroke-width="0.35"/><path d="M1138.4,310.3 V321.3 L1139.4,322.8 L1140.0,322.8 L1141.0,321.3 V310.3 Z" fill="url(#pg2)" stroke="#5e605e" stroke-width="0.35"/><path d="M1146.9,312.1 V323.0 L1147.8,324.7 L1148.5,324.7 L1149.5,323.0 V312.1 Z" fill="url(#pg2)" stroke="#5e605e" stroke-width="0.35"/><path d="M1155.8,314.0 V324.9 L1156.8,326.6 L1157.5,326.6 L1158.5,324.9 V314.0 Z" fill="url(#pg2)" stroke="#5e605e" stroke-width="0.35"/><path d="M1165.4,315.9 V327.0 L1166.4,328.7 L1167.1,328.7 L1168.1,327.0 V315.9 Z" fill="url(#pg2)" stroke="#5e605e" stroke-width="0.35"/><path d="M1175.4,318.0 V329.1 L1176.4,330.8 L1177.1,330.8 L1178.2,329.1 V318.0 Z" fill="url(#pg2)" stroke="#5e605e" stroke-width="0.35"/><path d="M1186.0,320.2 V331.4 L1187.1,333.1 L1187.8,333.1 L1188.9,331.4 V320.2 Z" fill="url(#pg2)" stroke="#5e605e" stroke-width="0.35"/><path d="M1197.2,322.5 V333.7 L1198.3,335.6 L1199.0,335.6 L1200.2,333.7 V322.5 Z" fill="url(#pg2)" stroke="#5e605e" stroke-width="0.35"/><path d="M1209.0,325.0 V336.2 L1210.2,338.1 L1210.9,338.1 L1212.1,336.2 V325.0 Z" fill="url(#pg2)" stroke="#5e605e" stroke-width="0.35"/><path d="M1220.9,327.5 V338.8 L1222.1,340.7 L1222.9,340.7 L1224.0,338.8 V327.5 Z" fill="url(#pg2)" stroke="#5e605e" stroke-width="0.35"/><path d="M1232.0,329.8 V341.1 L1233.2,343.1 L1234.0,343.1 L1235.2,341.1 V329.8 Z" fill="url(#pg2)" stroke="#5e605e" stroke-width="0.35"/><path d="M1244.3,332.3 V343.7 L1245.6,345.8 L1246.4,345.8 L1247.6,343.7 V332.3 Z" fill="url(#pg2)" stroke="#5e605e" stroke-width="0.35"/><path d="M1259.6,335.5 V347.0 L1260.9,349.1 L1261.7,349.1 L1263.0,347.0 V335.5 Z" fill="url(#pg2)" stroke="#5e605e" stroke-width="0.35"/><path d="M1276.7,339.1 V350.6 L1278.1,352.8 L1278.9,352.8 L1280.2,350.6 V339.1 Z" fill="url(#pg2)" stroke="#5e605e" stroke-width="0.35"/><path d="M1294.1,342.7 V354.3 L1295.5,356.5 L1296.4,356.5 L1297.7,354.3 V342.7 Z" fill="url(#pg2)" stroke="#5e605e" stroke-width="0.35"/><path d="M1312.9,346.6 V358.3 L1314.3,360.6 L1315.2,360.6 L1316.7,358.3 V346.6 Z" fill="url(#pg2)" stroke="#5e605e" stroke-width="0.35"/><path d="M1333.5,350.9 V362.6 L1335.0,365.1 L1335.9,365.1 L1337.4,362.6 V350.9 Z" fill="url(#pg2)" stroke="#5e605e" stroke-width="0.35"/><path d="M1363.4,350.9 V373.0 L1364.6,375.0 L1365.3,375.0 L1366.5,373.0 V350.9 Z" fill="url(#pg2)" stroke="#5e605e" stroke-width="0.35"/><path d="M1373.8,346.0 V367.6 L1375.0,369.5 L1375.7,369.5 L1376.8,367.6 V346.0 Z" fill="url(#pg2)" stroke="#5e605e" stroke-width="0.35"/><path d="M1383.4,341.6 V362.6 L1384.5,364.3 L1385.2,364.3 L1386.3,362.6 V341.6 Z" fill="url(#pg2)" stroke="#5e605e" stroke-width="0.35"/><path d="M1392.6,337.3 V357.8 L1393.6,359.5 L1394.3,359.5 L1395.3,357.8 V337.3 Z" fill="url(#pg2)" stroke="#5e605e" stroke-width="0.35"/><path d="M1401.7,333.1 V353.0 L1402.7,354.6 L1403.3,354.6 L1404.3,353.0 V333.1 Z" fill="url(#pg2)" stroke="#5e605e" stroke-width="0.35"/><path d="M1410.5,329.1 V348.4 L1411.4,350.0 L1412.0,350.0 L1412.9,348.4 V329.1 Z" fill="url(#pg2)" stroke="#5e605e" stroke-width="0.35"/><path d="M1418.8,325.2 V344.1 L1419.6,345.5 L1420.2,345.5 L1421.1,344.1 V325.2 Z" fill="url(#pg2)" stroke="#5e605e" stroke-width="0.35"/><path d="M1426.7,321.5 V339.9 L1427.6,341.3 L1428.1,341.3 L1428.9,339.9 V321.5 Z" fill="url(#pg2)" stroke="#5e605e" stroke-width="0.35"/><path d="M1434.0,318.2 V336.2 L1434.8,337.4 L1435.2,337.4 L1436.0,336.2 V318.2 Z" fill="url(#pg2)" stroke="#5e605e" stroke-width="0.35"/><path d="M1440.8,315.0 V332.6 L1441.5,333.8 L1442.0,333.8 L1442.8,332.6 V315.0 Z" fill="url(#pg2)" stroke="#5e605e" stroke-width="0.35"/><path d="M1447.4,312.0 V329.1 L1448.1,330.3 L1448.5,330.3 L1449.3,329.1 V312.0 Z" fill="url(#pg2)" stroke="#5e605e" stroke-width="0.35"/><path d="M1056.9,293.5 V323.5 L1058.0,325.3 L1058.8,325.3 L1059.9,323.5 V293.5 Z" fill="url(#pg)" stroke="#5e605e" stroke-width="0.35"/><path d="M1063.0,294.8 V325.2 L1064.1,327.1 L1064.9,327.1 L1066.0,325.2 V294.8 Z" fill="url(#pg)" stroke="#5e605e" stroke-width="0.35"/><path d="M1068.3,295.9 V326.8 L1069.5,328.8 L1070.3,328.8 L1071.5,326.8 V295.9 Z" fill="url(#pg)" stroke="#5e605e" stroke-width="0.35"/><path d="M1073.9,297.0 V328.4 L1075.1,330.4 L1075.9,330.4 L1077.1,328.4 V297.0 Z" fill="url(#pg)" stroke="#5e605e" stroke-width="0.35"/><path d="M1080.0,298.3 V330.2 L1081.2,332.2 L1082.0,332.2 L1083.2,330.2 V298.3 Z" fill="url(#pg)" stroke="#5e605e" stroke-width="0.35"/><path d="M1086.0,299.6 V332.0 L1087.3,334.1 L1088.1,334.1 L1089.4,332.0 V299.6 Z" fill="url(#pg)" stroke="#5e605e" stroke-width="0.35"/><path d="M1092.1,300.8 V333.8 L1093.4,335.9 L1094.2,335.9 L1095.5,333.8 V300.8 Z" fill="url(#pg)" stroke="#5e605e" stroke-width="0.35"/><path d="M1098.7,302.2 V335.7 L1100.0,337.8 L1100.8,337.8 L1102.1,335.7 V302.2 Z" fill="url(#pg)" stroke="#5e605e" stroke-width="0.35"/><path d="M1105.5,303.6 V337.7 L1106.9,339.9 L1107.7,339.9 L1109.1,337.7 V303.6 Z" fill="url(#pg)" stroke="#5e605e" stroke-width="0.35"/><path d="M1112.3,305.0 V339.7 L1113.7,341.9 L1114.5,341.9 L1115.9,339.7 V305.0 Z" fill="url(#pg)" stroke="#5e605e" stroke-width="0.35"/><path d="M1120.1,306.7 V342.0 L1121.6,344.3 L1122.4,344.3 L1123.9,342.0 V306.7 Z" fill="url(#pg)" stroke="#5e605e" stroke-width="0.35"/><path d="M1127.4,308.2 V344.1 L1128.8,346.5 L1129.8,346.5 L1131.2,344.1 V308.2 Z" fill="url(#pg)" stroke="#5e605e" stroke-width="0.35"/><path d="M1135.5,309.9 V346.5 L1136.9,348.9 L1137.9,348.9 L1139.3,346.5 V309.9 Z" fill="url(#pg)" stroke="#5e605e" stroke-width="0.35"/><path d="M1143.7,311.6 V348.9 L1145.2,351.3 L1146.2,351.3 L1147.7,348.9 V311.6 Z" fill="url(#pg)" stroke="#5e605e" stroke-width="0.35"/><path d="M1152.5,313.4 V351.4 L1154.0,354.0 L1155.0,354.0 L1156.5,351.4 V313.4 Z" fill="url(#pg)" stroke="#5e605e" stroke-width="0.35"/><path d="M1161.9,315.4 V354.2 L1163.5,356.8 L1164.5,356.8 L1166.1,354.2 V315.4 Z" fill="url(#pg)" stroke="#5e605e" stroke-width="0.35"/><path d="M1171.6,317.4 V357.0 L1173.3,359.7 L1174.3,359.7 L1176.0,357.0 V317.4 Z" fill="url(#pg)" stroke="#5e605e" stroke-width="0.35"/><path d="M1182.2,319.6 V360.1 L1183.9,362.9 L1184.9,362.9 L1186.6,360.1 V319.6 Z" fill="url(#pg)" stroke="#5e605e" stroke-width="0.35"/><path d="M1193.1,321.9 V363.3 L1194.9,366.1 L1195.9,366.1 L1197.7,363.3 V321.9 Z" fill="url(#pg)" stroke="#5e605e" stroke-width="0.35"/><path d="M1204.8,324.3 V366.7 L1206.5,369.6 L1207.7,369.6 L1209.4,366.7 V324.3 Z" fill="url(#pg)" stroke="#5e605e" stroke-width="0.35"/><path d="M1217.0,326.8 V370.3 L1218.8,373.3 L1220.0,373.3 L1221.8,370.3 V326.8 Z" fill="url(#pg)" stroke="#5e605e" stroke-width="0.35"/><path d="M1227.9,329.1 V373.5 L1229.8,376.6 L1231.0,376.6 L1232.9,373.5 V329.1 Z" fill="url(#pg)" stroke="#5e605e" stroke-width="0.35"/><path d="M1239.4,331.5 V376.8 L1241.3,380.0 L1242.5,380.0 L1244.4,376.8 V331.5 Z" fill="url(#pg)" stroke="#5e605e" stroke-width="0.35"/><path d="M1253.9,334.5 V381.1 L1255.9,384.3 L1257.1,384.3 L1259.1,381.1 V334.5 Z" fill="url(#pg)" stroke="#5e605e" stroke-width="0.35"/><path d="M1271.0,338.1 V386.1 L1273.0,389.5 L1274.4,389.5 L1276.4,386.1 V338.1 Z" fill="url(#pg)" stroke="#5e605e" stroke-width="0.35"/><path d="M1288.0,341.6 V391.1 L1290.1,394.6 L1291.5,394.6 L1293.6,391.1 V341.6 Z" fill="url(#pg)" stroke="#5e605e" stroke-width="0.35"/><path d="M1306.2,345.4 V396.4 L1308.4,400.0 L1309.8,400.0 L1312.0,396.4 V345.4 Z" fill="url(#pg)" stroke="#5e605e" stroke-width="0.35"/><path d="M1326.4,349.6 V402.3 L1328.7,406.1 L1330.1,406.1 L1332.4,402.3 V349.6 Z" fill="url(#pg)" stroke="#5e605e" stroke-width="0.35"/><path d="M1347.8,354.1 V408.6 L1350.2,412.5 L1351.8,412.5 L1354.2,408.6 V354.1 Z" fill="url(#pg)" stroke="#5e605e" stroke-width="0.35"/><path d="M1359.5,352.1 V401.7 L1361.6,405.1 L1363.0,405.1 L1365.1,401.7 V352.1 Z" fill="url(#pg)" stroke="#5e605e" stroke-width="0.35"/><path d="M1370.3,347.2 V394.9 L1372.3,398.2 L1373.5,398.2 L1375.5,394.9 V347.2 Z" fill="url(#pg)" stroke="#5e605e" stroke-width="0.35"/><path d="M1380.1,342.6 V388.7 L1382.0,391.8 L1383.2,391.8 L1385.1,388.7 V342.6 Z" fill="url(#pg)" stroke="#5e605e" stroke-width="0.35"/><path d="M1389.3,338.4 V382.9 L1391.1,385.9 L1392.3,385.9 L1394.1,382.9 V338.4 Z" fill="url(#pg)" stroke="#5e605e" stroke-width="0.35"/><path d="M1398.5,334.1 V377.1 L1400.3,379.9 L1401.3,379.9 L1403.1,377.1 V334.1 Z" fill="url(#pg)" stroke="#5e605e" stroke-width="0.35"/><path d="M1407.4,330.0 V371.5 L1409.1,374.2 L1410.1,374.2 L1411.8,371.5 V330.0 Z" fill="url(#pg)" stroke="#5e605e" stroke-width="0.35"/><path d="M1415.9,326.2 V366.2 L1417.4,368.7 L1418.4,368.7 L1419.9,366.2 V326.2 Z" fill="url(#pg)" stroke="#5e605e" stroke-width="0.35"/><path d="M1424.1,322.4 V361.0 L1425.5,363.5 L1426.5,363.5 L1427.9,361.0 V322.4 Z" fill="url(#pg)" stroke="#5e605e" stroke-width="0.35"/><path d="M1431.4,319.0 V356.4 L1432.9,358.7 L1433.7,358.7 L1435.2,356.4 V319.0 Z" fill="url(#pg)" stroke="#5e605e" stroke-width="0.35"/><path d="M1438.3,315.8 V352.0 L1439.7,354.2 L1440.5,354.2 L1441.9,352.0 V315.8 Z" fill="url(#pg)" stroke="#5e605e" stroke-width="0.35"/><path d="M1445.1,312.7 V347.8 L1446.4,349.8 L1447.2,349.8 L1448.5,347.8 V312.7 Z" fill="url(#pg)" stroke="#5e605e" stroke-width="0.35"/><path d="M1451.3,309.8 V343.9 L1452.5,345.9 L1453.3,345.9 L1454.5,343.9 V309.8 Z" fill="url(#pg)" stroke="#5e605e" stroke-width="0.35"/><path d="M1461.7,298.0 V332.4 L1463.0,334.5 L1463.8,334.5 L1465.1,332.4 V298.0 Z" fill="url(#pg)" stroke="#5e605e" stroke-width="0.35"/><path d="M1468.7,298.0 V331.5 L1470.0,333.6 L1470.8,333.6 L1472.1,331.5 V298.0 Z" fill="url(#pg)" stroke="#5e605e" stroke-width="0.35"/><path d="M1479.9,294.0 V323.0 L1480.9,324.7 L1481.5,324.7 L1482.5,323.0 V294.0 Z" fill="url(#pg)" stroke="#5e605e" stroke-width="0.35"/><path d="M1483.5,292.6 V320.6 L1484.6,322.3 L1485.2,322.3 L1486.2,320.6 V292.6 Z" fill="url(#pg)" stroke="#5e605e" stroke-width="0.35"/><path d="M1487.2,291.3 V318.2 L1488.2,319.9 L1488.9,319.9 L1489.9,318.2 V291.3 Z" fill="url(#pg)" stroke="#5e605e" stroke-width="0.35"/><path d="M1490.9,289.9 V315.8 L1491.9,317.4 L1492.6,317.4 L1493.6,315.8 V289.9 Z" fill="url(#pg)" stroke="#5e605e" stroke-width="0.35"/><path d="M1494.6,288.6 V313.3 L1495.6,315.0 L1496.2,315.0 L1497.3,313.3 V288.6 Z" fill="url(#pg)" stroke="#5e605e" stroke-width="0.35"/><path d="M1498.3,287.2 V310.9 L1499.3,312.6 L1499.9,312.6 L1501.0,310.9 V287.2 Z" fill="url(#pg)" stroke="#5e605e" stroke-width="0.35"/><path d="M1501.9,285.9 V308.5 L1503.0,310.2 L1503.6,310.2 L1504.6,308.5 V285.9 Z" fill="url(#pg)" stroke="#5e605e" stroke-width="0.35"/><path d="M1505.6,284.6 V306.1 L1506.6,307.8 L1507.3,307.8 L1508.3,306.1 V284.6 Z" fill="url(#pg)" stroke="#5e605e" stroke-width="0.35"/><path d="M1509.3,283.2 V303.7 L1510.3,305.3 L1511.0,305.3 L1512.0,303.7 V283.2 Z" fill="url(#pg)" stroke="#5e605e" stroke-width="0.35"/><path d="M1513.0,281.9 V301.2 L1514.0,302.9 L1514.6,302.9 L1515.7,301.2 V281.9 Z" fill="url(#pg)" stroke="#5e605e" stroke-width="0.35"/><path d="M1516.7,280.5 V298.8 L1517.7,300.5 L1518.3,300.5 L1519.3,298.8 V280.5 Z" fill="url(#pg)" stroke="#5e605e" stroke-width="0.35"/><polygon points="1053.5,273.0 1096.0,276.7 1352.5,311.0 1352.5,356.4 1053.5,292.6" fill="#33373a" /><polygon points="1053.5,273.0 1096.0,276.7 1190.0,290.0 1190.0,316.8 1053.5,292.6" fill="url(#bg1)" /><line x1="1056.0" y1="277.0" x2="1175.0" y2="296.0" stroke="#505456" stroke-width="0.3"/><line x1="1056.0" y1="280.4" x2="1175.0" y2="299.4" stroke="#505456" stroke-width="0.3"/><line x1="1056.0" y1="283.8" x2="1175.0" y2="302.8" stroke="#505456" stroke-width="0.3"/><line x1="1056.0" y1="287.2" x2="1175.0" y2="306.2" stroke="#505456" stroke-width="0.3"/><line x1="1056.0" y1="290.6" x2="1175.0" y2="309.6" stroke="#505456" stroke-width="0.3"/><path d="M1066,281.4 Q1070,281.6 1073,279.8 Q1078,277.6 1084,278.4 L1096,277" fill="none" stroke="#8d9192" stroke-width="0.7"/><polygon points="1357.4,311.0 1456.5,281.0 1456.5,310.2 1357.4,356.4" fill="#474b4e" /><line x1="1357.4" y1="318.6" x2="1456.5" y2="285.9" stroke="#63676a" stroke-width="0.35"/><line x1="1357.4" y1="326.1" x2="1456.5" y2="290.7" stroke="#63676a" stroke-width="0.35"/><line x1="1357.4" y1="333.7" x2="1456.5" y2="295.6" stroke="#63676a" stroke-width="0.35"/><line x1="1357.4" y1="341.3" x2="1456.5" y2="300.4" stroke="#63676a" stroke-width="0.35"/><line x1="1357.4" y1="348.8" x2="1456.5" y2="305.3" stroke="#63676a" stroke-width="0.35"/><line x1="1362.0" y1="309.6" x2="1362.0" y2="354.3" stroke="#5a5e61" stroke-width="0.25"/><line x1="1369.0" y1="307.5" x2="1369.0" y2="351.0" stroke="#5a5e61" stroke-width="0.25"/><line x1="1376.0" y1="305.4" x2="1376.0" y2="347.7" stroke="#5a5e61" stroke-width="0.25"/><line x1="1383.0" y1="303.2" x2="1383.0" y2="344.5" stroke="#5a5e61" stroke-width="0.25"/><line x1="1390.0" y1="301.1" x2="1390.0" y2="341.2" stroke="#5a5e61" stroke-width="0.25"/><line x1="1397.0" y1="299.0" x2="1397.0" y2="337.9" stroke="#5a5e61" stroke-width="0.25"/><line x1="1404.0" y1="296.9" x2="1404.0" y2="334.7" stroke="#5a5e61" stroke-width="0.25"/><line x1="1411.0" y1="294.8" x2="1411.0" y2="331.4" stroke="#5a5e61" stroke-width="0.25"/><line x1="1418.0" y1="292.7" x2="1418.0" y2="328.1" stroke="#5a5e61" stroke-width="0.25"/><line x1="1425.0" y1="290.5" x2="1425.0" y2="324.9" stroke="#5a5e61" stroke-width="0.25"/><line x1="1432.0" y1="288.4" x2="1432.0" y2="321.6" stroke="#5a5e61" stroke-width="0.25"/><line x1="1439.0" y1="286.3" x2="1439.0" y2="318.3" stroke="#5a5e61" stroke-width="0.25"/><line x1="1446.0" y1="284.2" x2="1446.0" y2="315.1" stroke="#5a5e61" stroke-width="0.25"/><line x1="1453.0" y1="282.1" x2="1453.0" y2="311.8" stroke="#5a5e61" stroke-width="0.25"/><polygon points="1352.5,311.0 1357.4,311.0 1357.4,356.4 1352.5,356.4" fill="#1c1f20" /><polygon points="1215.6,299.5 1220.2,299.9 1220.2,304.7 1215.6,304.3" fill="#141617" /><polygon points="1234.2,302.8 1238.8,303.2 1238.8,308.0 1234.2,307.6" fill="#141617" /><polygon points="1268.4,308.1 1273.0,308.5 1273.0,313.3 1268.4,312.9" fill="#141617" /><polygon points="1333.2,318.3 1337.8,318.7 1337.8,323.5 1333.2,323.1" fill="#141617" /><polygon points="1372.6,313.6 1376.6,312.6 1376.6,317.8 1372.6,318.9" fill="#141617" /><polygon points="1386.0,318.0 1402.0,297.0 1408.0,297.0 1421.0,300.0 1405.0,310.0 1401.0,320.0" fill="#8f9191" /><polygon points="1405.0,289.0 1420.0,291.5 1421.0,300.0 1408.0,297.0" fill="#6d7071" /><polygon points="1473.3,272.6 1484.3,271.1 1484.3,294.6 1473.3,293.9" fill="#2c3032" /><polygon points="1484.3,271.1 1518.8,261.6 1518.8,280.7 1484.3,294.6" fill="#474b4e" stroke="#15181a" stroke-width="0.5" /><line x1="1484.3" y1="277.0" x2="1518.8" y2="266.4" stroke="#5d6163" stroke-width="0.3"/><line x1="1484.3" y1="282.9" x2="1518.8" y2="271.2" stroke="#5d6163" stroke-width="0.3"/><line x1="1484.3" y1="288.8" x2="1518.8" y2="276.0" stroke="#5d6163" stroke-width="0.3"/><polygon points="1499.0,267.2 1503.0,261.4 1512.0,260.6 1518.8,263.6 1518.8,271.4 1509.0,270.6" fill="#6d6f70" /><polygon points="1461.6,279.2 1472.2,279.2 1472.2,296.2 1461.6,296.2" fill="#ecece4" /><polygon points="1460.0,296.0 1474.8,295.4 1474.8,298.8 1460.0,299.4" fill="#dcdcd5" /><polygon points="1262.0,127.9 1394.1,103.5 1394.1,154.3 1357.4,143.0 1352.5,142.0 1262.0,154.4" fill="#d97046" stroke="#1a1210" stroke-width="0.8" /><line x1="1265.7" y1="128.0" x2="1265.7" y2="153.9" stroke="#2a1a12" stroke-width="0.6"/><line x1="1265.7" y1="142.6" x2="1394.1" y2="121.8" stroke="#2a1a12" stroke-width="0.6"/><polygon points="1096.0,177.2 1352.5,142.0 1352.5,311.0 1096.0,276.6" fill="#d97046" /><polygon points="1099.5,176.7 1103.5,176.2 1103.5,213.7 1099.5,213.8" fill="#2f3436" /><polygon points="1099.5,218.1 1103.5,218.0 1103.5,244.1 1099.5,243.9" fill="#2f3436" /><polygon points="1099.5,248.6 1103.5,248.8 1103.5,277.6 1099.5,277.1" fill="#2f3436" /><polygon points="1099.9,193.0 1103.1,192.7 1103.1,212.4 1099.9,212.5" fill="#0c0d0e" /><polygon points="1100.8,193.9 1102.4,193.7 1102.4,196.1 1100.8,196.2" fill="#b9b3b2" /><polygon points="1100.9,198.8 1101.6,198.7 1101.6,209.3 1100.9,209.4" fill="#c8b1a8" /><polygon points="1101.9,198.7 1102.5,198.6 1102.5,209.3 1101.9,209.3" fill="#8e8380" /><polygon points="1099.9,221.4 1103.1,221.4 1103.1,242.9 1099.9,242.8" fill="#0c0d0e" /><polygon points="1100.8,222.5 1102.4,222.5 1102.4,225.0 1100.8,225.0" fill="#b9b3b2" /><polygon points="1100.9,227.8 1101.6,227.8 1101.6,239.4 1100.9,239.4" fill="#c8b1a8" /><polygon points="1101.9,227.8 1102.5,227.8 1102.5,239.4 1101.9,239.4" fill="#8e8380" /><polygon points="1099.9,252.0 1103.1,252.2 1103.1,275.4 1099.9,275.0" fill="#0c0d0e" /><polygon points="1100.8,253.2 1102.4,253.3 1102.4,256.1 1100.8,256.0" fill="#b9b3b2" /><polygon points="1100.9,259.0 1101.6,259.1 1101.6,271.6 1100.9,271.5" fill="#c8b1a8" /><polygon points="1101.9,259.1 1102.5,259.1 1102.5,271.7 1101.9,271.6" fill="#8e8380" /><polygon points="1107.5,175.7 1114.6,174.7 1114.6,213.3 1107.5,213.6" fill="#2f3436" /><polygon points="1107.5,217.9 1114.6,217.7 1114.6,244.6 1107.5,244.3" fill="#2f3436" /><polygon points="1107.5,249.0 1114.6,249.4 1114.6,279.1 1107.5,278.1" fill="#2f3436" /><polygon points="1107.9,192.2 1114.2,191.6 1114.2,211.9 1107.9,212.2" fill="#0c0d0e" /><polygon points="1108.9,192.9 1113.4,192.5 1113.4,195.2 1108.9,195.5" fill="#b9b3b2" /><polygon points="1109.2,198.3 1110.5,198.2 1110.5,209.1 1109.2,209.1" fill="#c8b1a8" /><polygon points="1111.7,198.1 1113.2,198.0 1113.2,208.9 1111.7,209.0" fill="#c8b1a8" /><polygon points="1109.2,204.5 1110.5,204.5 1110.5,209.1 1109.2,209.1" fill="#a79a97" /><polygon points="1107.9,221.3 1114.2,221.2 1114.2,243.4 1107.9,243.1" fill="#0c0d0e" /><polygon points="1108.9,222.1 1113.4,222.1 1113.4,225.0 1108.9,225.0" fill="#b9b3b2" /><polygon points="1109.2,228.1 1110.5,228.1 1110.5,239.9 1109.2,239.9" fill="#c8b1a8" /><polygon points="1111.7,228.1 1113.2,228.1 1113.2,240.0 1111.7,240.0" fill="#c8b1a8" /><polygon points="1109.2,234.8 1110.5,234.9 1110.5,239.9 1109.2,239.9" fill="#a79a97" /><polygon points="1107.9,252.5 1114.2,253.0 1114.2,276.9 1107.9,276.1" fill="#0c0d0e" /><polygon points="1108.9,253.6 1113.4,253.9 1113.4,257.0 1108.9,256.6" fill="#b9b3b2" /><polygon points="1109.2,259.9 1110.5,260.1 1110.5,272.9 1109.2,272.7" fill="#c8b1a8" /><polygon points="1111.7,260.2 1113.2,260.3 1113.2,273.2 1111.7,273.0" fill="#c8b1a8" /><polygon points="1109.2,267.3 1110.5,267.4 1110.5,272.9 1109.2,272.7" fill="#a79a97" /><polygon points="1118.8,174.1 1126.9,173.0 1126.9,212.8 1118.8,213.1" fill="#2f3436" /><polygon points="1118.8,217.6 1126.9,217.4 1126.9,245.2 1118.8,244.8" fill="#2f3436" /><polygon points="1118.8,249.7 1126.9,250.1 1126.9,280.7 1118.8,279.7" fill="#2f3436" /><polygon points="1119.2,191.2 1126.5,190.5 1126.5,211.4 1119.2,211.7" fill="#0c0d0e" /><polygon points="1120.4,191.9 1125.6,191.4 1125.6,194.1 1120.4,194.6" fill="#b9b3b2" /><polygon points="1120.7,197.4 1122.3,197.3 1122.3,208.5 1120.7,208.6" fill="#c8b1a8" /><polygon points="1123.6,197.2 1125.3,197.1 1125.3,208.4 1123.6,208.4" fill="#c8b1a8" /><polygon points="1120.7,203.8 1122.3,203.7 1122.3,208.5 1120.7,208.6" fill="#a79a97" /><polygon points="1119.2,221.1 1126.5,221.0 1126.5,243.9 1119.2,243.6" fill="#0c0d0e" /><polygon points="1120.4,222.0 1125.6,221.9 1125.6,224.9 1120.4,224.9" fill="#b9b3b2" /><polygon points="1120.7,228.1 1122.3,228.1 1122.3,240.3 1120.7,240.2" fill="#c8b1a8" /><polygon points="1123.6,228.1 1125.3,228.1 1125.3,240.4 1123.6,240.3" fill="#c8b1a8" /><polygon points="1120.7,235.1 1122.3,235.1 1122.3,240.3 1120.7,240.2" fill="#a79a97" /><polygon points="1119.2,253.3 1126.5,253.8 1126.5,278.5 1119.2,277.5" fill="#0c0d0e" /><polygon points="1120.4,254.3 1125.6,254.7 1125.6,257.9 1120.4,257.5" fill="#b9b3b2" /><polygon points="1120.7,260.9 1122.3,261.1 1122.3,274.2 1120.7,274.1" fill="#c8b1a8" /><polygon points="1123.6,261.2 1125.3,261.3 1125.3,274.6 1123.6,274.4" fill="#c8b1a8" /><polygon points="1120.7,268.5 1122.3,268.6 1122.3,274.2 1120.7,274.1" fill="#a79a97" /><polygon points="1131.0,172.4 1139.8,171.2 1139.8,212.4 1131.0,212.7" fill="#2f3436" /><polygon points="1131.0,217.3 1139.8,217.0 1139.8,245.7 1131.0,245.3" fill="#2f3436" /><polygon points="1131.0,250.4 1139.8,250.9 1139.8,282.5 1131.0,281.3" fill="#2f3436" /><polygon points="1131.4,190.0 1139.4,189.3 1139.4,210.9 1131.4,211.3" fill="#0c0d0e" /><polygon points="1132.7,190.8 1138.4,190.2 1138.4,193.0 1132.7,193.5" fill="#b9b3b2" /><polygon points="1133.0,196.5 1134.8,196.4 1134.8,207.9 1133.0,208.0" fill="#c8b1a8" /><polygon points="1136.2,196.2 1138.1,196.1 1138.1,207.7 1136.2,207.8" fill="#c8b1a8" /><polygon points="1133.0,203.1 1134.8,203.0 1134.8,207.9 1133.0,208.0" fill="#a79a97" /><polygon points="1131.4,220.9 1139.4,220.8 1139.4,244.4 1131.4,244.1" fill="#0c0d0e" /><polygon points="1132.7,221.8 1138.4,221.7 1138.4,224.8 1132.7,224.8" fill="#b9b3b2" /><polygon points="1133.0,228.1 1134.8,228.1 1134.8,240.7 1133.0,240.6" fill="#c8b1a8" /><polygon points="1136.2,228.1 1138.1,228.1 1138.1,240.8 1136.2,240.8" fill="#c8b1a8" /><polygon points="1133.0,235.3 1134.8,235.3 1134.8,240.7 1133.0,240.6" fill="#a79a97" /><polygon points="1131.4,254.1 1139.4,254.6 1139.4,280.1 1131.4,279.1" fill="#0c0d0e" /><polygon points="1132.7,255.2 1138.4,255.6 1138.4,258.9 1132.7,258.5" fill="#b9b3b2" /><polygon points="1133.0,262.0 1134.8,262.1 1134.8,275.7 1133.0,275.5" fill="#c8b1a8" /><polygon points="1136.2,262.3 1138.1,262.4 1138.1,276.1 1136.2,275.9" fill="#c8b1a8" /><polygon points="1133.0,269.8 1134.8,269.9 1134.8,275.7 1133.0,275.5" fill="#a79a97" /><polygon points="1144.0,170.6 1153.3,169.4 1153.3,211.9 1144.0,212.2" fill="#2f3436" /><polygon points="1144.0,216.9 1153.3,216.7 1153.3,246.3 1144.0,245.9" fill="#2f3436" /><polygon points="1144.0,251.1 1153.3,251.6 1153.3,284.3 1144.0,283.0" fill="#2f3436" /><polygon points="1144.4,188.8 1152.9,188.0 1152.9,210.4 1144.4,210.7" fill="#0c0d0e" /><polygon points="1145.8,189.6 1151.9,189.0 1151.9,191.9 1145.8,192.4" fill="#b9b3b2" /><polygon points="1146.1,195.5 1148.0,195.3 1148.0,207.3 1146.1,207.4" fill="#c8b1a8" /><polygon points="1149.5,195.2 1151.5,195.1 1151.5,207.1 1149.5,207.2" fill="#c8b1a8" /><polygon points="1146.1,202.3 1148.0,202.2 1148.0,207.3 1146.1,207.4" fill="#a79a97" /><polygon points="1144.4,220.7 1152.9,220.5 1152.9,245.0 1144.4,244.6" fill="#0c0d0e" /><polygon points="1145.8,221.6 1151.9,221.5 1151.9,224.7 1145.8,224.7" fill="#b9b3b2" /><polygon points="1146.1,228.1 1148.0,228.1 1148.0,241.1 1146.1,241.1" fill="#c8b1a8" /><polygon points="1149.5,228.1 1151.5,228.1 1151.5,241.3 1149.5,241.2" fill="#c8b1a8" /><polygon points="1146.1,235.6 1148.0,235.6 1148.0,241.1 1146.1,241.1" fill="#a79a97" /><polygon points="1144.4,255.0 1152.9,255.5 1152.9,281.8 1144.4,280.8" fill="#0c0d0e" /><polygon points="1145.8,256.1 1151.9,256.5 1151.9,259.9 1145.8,259.5" fill="#b9b3b2" /><polygon points="1146.1,263.1 1148.0,263.3 1148.0,277.3 1146.1,277.1" fill="#c8b1a8" /><polygon points="1149.5,263.4 1151.5,263.6 1151.5,277.7 1149.5,277.5" fill="#c8b1a8" /><polygon points="1146.1,271.1 1148.0,271.3 1148.0,277.3 1146.1,277.1" fill="#a79a97" /><polygon points="1157.9,168.7 1167.7,167.4 1167.7,211.3 1157.9,211.7" fill="#2f3436" /><polygon points="1157.9,216.6 1167.7,216.3 1167.7,247.0 1157.9,246.5" fill="#2f3436" /><polygon points="1157.9,251.9 1167.7,252.5 1167.7,286.2 1157.9,284.9" fill="#2f3436" /><polygon points="1158.3,187.5 1167.3,186.7 1167.3,209.8 1158.3,210.2" fill="#0c0d0e" /><polygon points="1159.7,188.3 1166.2,187.7 1166.2,190.7 1159.7,191.3" fill="#b9b3b2" /><polygon points="1160.1,194.4 1162.1,194.3 1162.1,206.6 1160.1,206.7" fill="#c8b1a8" /><polygon points="1163.7,194.1 1165.9,194.0 1165.9,206.4 1163.7,206.5" fill="#c8b1a8" /><polygon points="1160.1,201.5 1162.1,201.3 1162.1,206.6 1160.1,206.7" fill="#a79a97" /><polygon points="1158.3,220.5 1167.3,220.3 1167.3,245.6 1158.3,245.2" fill="#0c0d0e" /><polygon points="1159.7,221.4 1166.2,221.3 1166.2,224.6 1159.7,224.7" fill="#b9b3b2" /><polygon points="1160.1,228.1 1162.1,228.1 1162.1,241.6 1160.1,241.5" fill="#c8b1a8" /><polygon points="1163.7,228.1 1165.9,228.1 1165.9,241.7 1163.7,241.7" fill="#c8b1a8" /><polygon points="1160.1,235.8 1162.1,235.9 1162.1,241.6 1160.1,241.5" fill="#a79a97" /><polygon points="1158.3,255.9 1167.3,256.5 1167.3,283.7 1158.3,282.5" fill="#0c0d0e" /><polygon points="1159.7,257.1 1166.2,257.5 1166.2,261.0 1159.7,260.5" fill="#b9b3b2" /><polygon points="1160.1,264.3 1162.1,264.5 1162.1,279.0 1160.1,278.8" fill="#c8b1a8" /><polygon points="1163.7,264.6 1165.9,264.8 1165.9,279.4 1163.7,279.2" fill="#c8b1a8" /><polygon points="1160.1,272.6 1162.1,272.8 1162.1,279.0 1160.1,278.8" fill="#a79a97" /><polygon points="1172.6,166.7 1178.2,165.9 1178.2,210.9 1172.6,211.1" fill="#2f3436" /><polygon points="1172.6,216.2 1178.2,216.1 1178.2,247.4 1172.6,247.2" fill="#2f3436" /><polygon points="1172.6,252.7 1178.2,253.1 1178.2,287.6 1172.6,286.9" fill="#2f3436" /><polygon points="1173.0,186.2 1177.8,185.7 1177.8,209.4 1173.0,209.6" fill="#0c0d0e" /><polygon points="1174.3,187.2 1176.7,187.0 1176.7,189.8 1174.3,190.0" fill="#b9b3b2" /><polygon points="1174.4,193.1 1175.5,193.0 1175.5,205.7 1174.4,205.7" fill="#c8b1a8" /><polygon points="1176.0,192.9 1176.8,192.9 1176.8,205.6 1176.0,205.7" fill="#8e8380" /><polygon points="1173.0,220.2 1177.8,220.1 1177.8,246.0 1173.0,245.8" fill="#0c0d0e" /><polygon points="1174.3,221.5 1176.7,221.4 1176.7,224.5 1174.3,224.6" fill="#b9b3b2" /><polygon points="1174.4,227.9 1175.5,227.9 1175.5,241.8 1174.4,241.7" fill="#c8b1a8" /><polygon points="1176.0,227.9 1176.8,227.9 1176.8,241.8 1176.0,241.8" fill="#8e8380" /><polygon points="1173.0,256.9 1177.8,257.2 1177.8,285.0 1173.0,284.4" fill="#0c0d0e" /><polygon points="1174.3,258.3 1176.7,258.5 1176.7,261.8 1174.3,261.7" fill="#b9b3b2" /><polygon points="1174.4,265.3 1175.5,265.3 1175.5,280.3 1174.4,280.2" fill="#c8b1a8" /><polygon points="1176.0,265.4 1176.8,265.5 1176.8,280.5 1176.0,280.4" fill="#8e8380" /><polygon points="1186.3,164.8 1200.3,162.9 1200.3,210.1 1186.3,210.6" fill="#2f3436" /><polygon points="1186.3,215.8 1200.3,215.5 1200.3,248.4 1186.3,247.8" fill="#2f3436" /><polygon points="1186.3,253.5 1200.3,254.3 1200.3,290.6 1186.3,288.7" fill="#2f3436" /><polygon points="1186.7,184.9 1199.9,183.6 1199.9,208.5 1186.7,209.0" fill="#0c0d0e" /><polygon points="1188.8,185.6 1198.3,184.8 1198.3,188.0 1188.8,188.8" fill="#b9b3b2" /><polygon points="1189.3,192.2 1192.2,191.9 1192.2,205.1 1189.3,205.3" fill="#c8b1a8" /><polygon points="1194.6,191.7 1197.8,191.5 1197.8,204.9 1194.6,205.0" fill="#c8b1a8" /><polygon points="1189.3,199.7 1192.2,199.5 1192.2,205.1 1189.3,205.3" fill="#a79a97" /><polygon points="1186.7,220.0 1199.9,219.8 1199.9,246.9 1186.7,246.4" fill="#0c0d0e" /><polygon points="1188.8,221.0 1198.3,220.9 1198.3,224.4 1188.8,224.5" fill="#b9b3b2" /><polygon points="1189.3,228.2 1192.2,228.2 1192.2,242.6 1189.3,242.5" fill="#c8b1a8" /><polygon points="1194.6,228.2 1197.8,228.2 1197.8,242.8 1194.6,242.7" fill="#c8b1a8" /><polygon points="1189.3,236.4 1192.2,236.4 1192.2,242.6 1189.3,242.5" fill="#a79a97" /><polygon points="1186.7,257.8 1199.9,258.6 1199.9,287.9 1186.7,286.2" fill="#0c0d0e" /><polygon points="1188.8,259.1 1198.3,259.7 1198.3,263.5 1188.8,262.8" fill="#b9b3b2" /><polygon points="1189.3,266.8 1192.2,267.1 1192.2,282.6 1189.3,282.2" fill="#c8b1a8" /><polygon points="1194.6,267.3 1197.8,267.5 1197.8,283.3 1194.6,282.9" fill="#c8b1a8" /><polygon points="1189.3,275.7 1192.2,276.0 1192.2,282.6 1189.3,282.2" fill="#a79a97" /><polygon points="1206.4,162.1 1219.3,160.3 1219.3,209.4 1206.4,209.9" fill="#2f3436" /><polygon points="1206.4,215.3 1219.3,215.0 1219.3,249.3 1206.4,248.7" fill="#2f3436" /><polygon points="1206.4,254.7 1219.3,255.4 1219.3,293.1 1206.4,291.4" fill="#2f3436" /><polygon points="1206.8,183.0 1218.9,181.9 1218.9,207.7 1206.8,208.2" fill="#0c0d0e" /><polygon points="1208.7,183.8 1217.4,183.0 1217.4,186.4 1208.7,187.1" fill="#b9b3b2" /><polygon points="1209.2,190.6 1211.9,190.4 1211.9,204.2 1209.2,204.3" fill="#c8b1a8" /><polygon points="1214.1,190.3 1217.0,190.0 1217.0,203.9 1214.1,204.1" fill="#c8b1a8" /><polygon points="1209.2,198.5 1211.9,198.3 1211.9,204.2 1209.2,204.3" fill="#a79a97" /><polygon points="1206.8,219.7 1218.9,219.5 1218.9,247.7 1206.8,247.2" fill="#0c0d0e" /><polygon points="1208.7,220.7 1217.4,220.6 1217.4,224.3 1208.7,224.3" fill="#b9b3b2" /><polygon points="1209.2,228.2 1211.9,228.2 1211.9,243.2 1209.2,243.1" fill="#c8b1a8" /><polygon points="1214.1,228.2 1217.0,228.2 1217.0,243.4 1214.1,243.3" fill="#c8b1a8" /><polygon points="1209.2,236.8 1211.9,236.8 1211.9,243.2 1209.2,243.1" fill="#a79a97" /><polygon points="1206.8,259.1 1218.9,259.9 1218.9,290.3 1206.8,288.8" fill="#0c0d0e" /><polygon points="1208.7,260.4 1217.4,261.0 1217.4,265.0 1208.7,264.3" fill="#b9b3b2" /><polygon points="1209.2,268.5 1211.9,268.7 1211.9,284.9 1209.2,284.6" fill="#c8b1a8" /><polygon points="1214.1,268.9 1217.0,269.2 1217.0,285.5 1214.1,285.2" fill="#c8b1a8" /><polygon points="1209.2,277.8 1211.9,278.0 1211.9,284.9 1209.2,284.6" fill="#a79a97" /><polygon points="1224.7,159.6 1238.7,157.6 1238.7,208.7 1224.7,209.2" fill="#2f3436" /><polygon points="1224.7,214.9 1238.7,214.5 1238.7,250.1 1224.7,249.5" fill="#2f3436" /><polygon points="1224.7,255.7 1238.7,256.5 1238.7,295.7 1224.7,293.9" fill="#2f3436" /><polygon points="1225.1,181.3 1238.3,180.1 1238.3,206.9 1225.1,207.5" fill="#0c0d0e" /><polygon points="1227.2,182.1 1236.7,181.3 1236.7,184.8 1227.2,185.6" fill="#b9b3b2" /><polygon points="1227.7,189.2 1230.6,189.0 1230.6,203.3 1227.7,203.4" fill="#c8b1a8" /><polygon points="1233.0,188.8 1236.2,188.5 1236.2,203.0 1233.0,203.1" fill="#c8b1a8" /><polygon points="1227.7,197.4 1230.6,197.2 1230.6,203.3 1227.7,203.4" fill="#a79a97" /><polygon points="1225.1,219.4 1238.3,219.1 1238.3,248.5 1225.1,247.9" fill="#0c0d0e" /><polygon points="1227.2,220.5 1236.7,220.3 1236.7,224.1 1227.2,224.2" fill="#b9b3b2" /><polygon points="1227.7,228.2 1230.6,228.2 1230.6,243.8 1227.7,243.7" fill="#c8b1a8" /><polygon points="1233.0,228.2 1236.2,228.2 1236.2,244.0 1233.0,243.9" fill="#c8b1a8" /><polygon points="1227.7,237.1 1230.6,237.2 1230.6,243.8 1227.7,243.7" fill="#a79a97" /><polygon points="1225.1,260.3 1238.3,261.2 1238.3,292.8 1225.1,291.1" fill="#0c0d0e" /><polygon points="1227.2,261.7 1236.7,262.3 1236.7,266.4 1227.2,265.7" fill="#b9b3b2" /><polygon points="1227.7,270.1 1230.6,270.3 1230.6,287.2 1227.7,286.8" fill="#c8b1a8" /><polygon points="1233.0,270.5 1236.2,270.8 1236.2,287.8 1233.0,287.4" fill="#c8b1a8" /><polygon points="1227.7,279.7 1230.6,280.0 1230.6,287.2 1227.7,286.8" fill="#a79a97" /><polygon points="1245.0,156.8 1252.9,155.7 1252.9,208.2 1245.0,208.5" fill="#2f3436" /><polygon points="1245.0,214.3 1252.9,214.1 1252.9,250.8 1245.0,250.4" fill="#2f3436" /><polygon points="1245.0,256.9 1252.9,257.3 1252.9,297.6 1245.0,296.6" fill="#2f3436" /><polygon points="1245.4,179.4 1252.5,178.7 1252.5,206.3 1245.4,206.6" fill="#0c0d0e" /><polygon points="1246.5,180.4 1251.6,179.9 1251.6,183.5 1246.5,183.9" fill="#b9b3b2" /><polygon points="1246.8,187.7 1248.4,187.6 1248.4,202.4 1246.8,202.5" fill="#c8b1a8" /><polygon points="1249.7,187.5 1251.4,187.4 1251.4,202.3 1249.7,202.3" fill="#c8b1a8" /><polygon points="1246.8,196.2 1248.4,196.1 1248.4,202.4 1246.8,202.5" fill="#a79a97" /><polygon points="1245.4,219.0 1252.5,218.9 1252.5,249.1 1245.4,248.8" fill="#0c0d0e" /><polygon points="1246.5,220.2 1251.6,220.1 1251.6,224.0 1246.5,224.1" fill="#b9b3b2" /><polygon points="1246.8,228.3 1248.4,228.3 1248.4,244.4 1246.8,244.4" fill="#c8b1a8" /><polygon points="1249.7,228.3 1251.4,228.3 1251.4,244.5 1249.7,244.5" fill="#c8b1a8" /><polygon points="1246.8,237.5 1248.4,237.5 1248.4,244.4 1246.8,244.4" fill="#a79a97" /><polygon points="1245.4,261.7 1252.5,262.1 1252.5,294.6 1245.4,293.7" fill="#0c0d0e" /><polygon points="1246.5,263.0 1251.6,263.4 1251.6,267.6 1246.5,267.2" fill="#b9b3b2" /><polygon points="1246.8,271.7 1248.4,271.9 1248.4,289.3 1246.8,289.1" fill="#c8b1a8" /><polygon points="1249.7,272.0 1251.4,272.1 1251.4,289.6 1249.7,289.4" fill="#c8b1a8" /><polygon points="1246.8,281.7 1248.4,281.9 1248.4,289.3 1246.8,289.1" fill="#a79a97" /><polygon points="1259.6,154.8 1275.5,152.6 1275.5,207.3 1259.6,207.9" fill="#2f3436" /><polygon points="1259.6,214.0 1275.5,213.6 1275.5,251.8 1259.6,251.1" fill="#2f3436" /><polygon points="1259.6,257.7 1275.5,258.6 1275.5,300.7 1259.6,298.5" fill="#2f3436" /><polygon points="1260.0,178.0 1275.1,176.6 1275.1,205.4 1260.0,206.0" fill="#0c0d0e" /><polygon points="1262.4,178.9 1273.3,177.9 1273.3,181.7 1262.4,182.6" fill="#b9b3b2" /><polygon points="1263.0,186.5 1266.3,186.2 1266.3,201.5 1263.0,201.7" fill="#c8b1a8" /><polygon points="1269.1,186.0 1272.7,185.7 1272.7,201.2 1269.1,201.4" fill="#c8b1a8" /><polygon points="1263.0,195.2 1266.3,195.0 1266.3,201.5 1263.0,201.7" fill="#a79a97" /><polygon points="1260.0,218.8 1275.1,218.5 1275.1,250.0 1260.0,249.4" fill="#0c0d0e" /><polygon points="1262.4,220.0 1273.3,219.8 1273.3,223.9 1262.4,224.0" fill="#b9b3b2" /><polygon points="1263.0,228.3 1266.3,228.3 1266.3,245.0 1263.0,244.9" fill="#c8b1a8" /><polygon points="1269.1,228.3 1272.7,228.3 1272.7,245.2 1269.1,245.1" fill="#c8b1a8" /><polygon points="1263.0,237.8 1266.3,237.9 1266.3,245.0 1263.0,244.9" fill="#a79a97" /><polygon points="1295.0,149.9 1314.6,147.2 1314.6,205.9 1295.0,206.6" fill="#2f3436" /><polygon points="1295.0,213.1 1314.6,212.6 1314.6,253.5 1295.0,252.6" fill="#2f3436" /><polygon points="1295.0,259.7 1314.6,260.8 1314.6,305.9 1295.0,303.3" fill="#2f3436" /><polygon points="1295.4,174.7 1314.2,173.0 1314.2,203.9 1295.4,204.6" fill="#0c0d0e" /><polygon points="1298.4,175.7 1311.9,174.4 1311.9,178.4 1298.4,179.6" fill="#b9b3b2" /><polygon points="1299.2,183.7 1303.3,183.4 1303.3,199.7 1299.2,199.9" fill="#c8b1a8" /><polygon points="1306.7,183.1 1311.2,182.8 1311.2,199.4 1306.7,199.6" fill="#c8b1a8" /><polygon points="1299.2,193.0 1303.3,192.8 1303.3,199.7 1299.2,199.9" fill="#a79a97" /><polygon points="1295.4,218.2 1314.2,217.9 1314.2,251.6 1295.4,250.8" fill="#0c0d0e" /><polygon points="1298.4,219.5 1311.9,219.3 1311.9,223.6 1298.4,223.7" fill="#b9b3b2" /><polygon points="1299.2,228.3 1303.3,228.3 1303.3,246.2 1299.2,246.1" fill="#c8b1a8" /><polygon points="1306.7,228.3 1311.2,228.3 1311.2,246.5 1306.7,246.3" fill="#c8b1a8" /><polygon points="1299.2,238.5 1303.3,238.6 1303.3,246.2 1299.2,246.1" fill="#a79a97" /><polygon points="1295.4,265.0 1314.2,266.2 1314.2,302.6 1295.4,300.2" fill="#0c0d0e" /><polygon points="1298.4,266.6 1311.9,267.5 1311.9,272.2 1298.4,271.2" fill="#b9b3b2" /><polygon points="1299.2,276.2 1303.3,276.6 1303.3,295.8 1299.2,295.3" fill="#c8b1a8" /><polygon points="1306.7,276.8 1311.2,277.2 1311.2,296.8 1306.7,296.2" fill="#c8b1a8" /><polygon points="1299.2,287.2 1303.3,287.6 1303.3,295.8 1299.2,295.3" fill="#a79a97" /><polygon points="1322.0,146.2 1332.5,144.7 1332.5,205.2 1322.0,205.6" fill="#2f3436" /><polygon points="1322.0,212.4 1332.5,212.1 1332.5,254.3 1322.0,253.8" fill="#2f3436" /><polygon points="1322.0,261.3 1332.5,261.9 1332.5,308.3 1322.0,306.9" fill="#2f3436" /><polygon points="1322.4,172.2 1332.1,171.3 1332.1,203.1 1322.4,203.5" fill="#0c0d0e" /><polygon points="1324.0,173.3 1330.9,172.7 1330.9,176.8 1324.0,177.4" fill="#b9b3b2" /><polygon points="1324.3,181.8 1326.5,181.6 1326.5,198.6 1324.3,198.7" fill="#c8b1a8" /><polygon points="1328.2,181.5 1330.5,181.3 1330.5,198.4 1328.2,198.5" fill="#c8b1a8" /><polygon points="1324.3,191.5 1326.5,191.4 1326.5,198.6 1324.3,198.7" fill="#a79a97" /><polygon points="1322.4,217.8 1332.1,217.6 1332.1,252.4 1322.4,252.0" fill="#0c0d0e" /><polygon points="1324.0,219.1 1330.9,219.0 1330.9,223.5 1324.0,223.6" fill="#b9b3b2" /><polygon points="1324.3,228.4 1326.5,228.4 1326.5,247.0 1324.3,246.9" fill="#c8b1a8" /><polygon points="1328.2,228.4 1330.5,228.4 1330.5,247.1 1328.2,247.0" fill="#c8b1a8" /><polygon points="1324.3,239.0 1326.5,239.0 1326.5,247.0 1324.3,246.9" fill="#a79a97" /><polygon points="1322.4,266.8 1332.1,267.4 1332.1,304.9 1322.4,303.6" fill="#0c0d0e" /><polygon points="1324.0,268.3 1330.9,268.8 1330.9,273.7 1324.0,273.2" fill="#b9b3b2" /><polygon points="1324.3,278.4 1326.5,278.5 1326.5,298.6 1324.3,298.3" fill="#c8b1a8" /><polygon points="1328.2,278.7 1330.5,278.9 1330.5,299.1 1328.2,298.8" fill="#c8b1a8" /><polygon points="1324.3,289.8 1326.5,290.0 1326.5,298.6 1324.3,298.3" fill="#a79a97" /><polygon points="1096.0,177.2 1097.0,177.1 1097.0,276.7 1096.0,276.6" fill="#b4582f" /><polygon points="1098.7,176.9 1099.5,176.7 1099.5,277.1 1098.7,277.0" fill="#ee875a" /><line x1="1096.0" y1="177.2" x2="1096.0" y2="276.6" stroke="#2a1a12" stroke-width="0.45"/><line x1="1099.5" y1="176.7" x2="1099.5" y2="277.1" stroke="#2a1a12" stroke-width="0.45"/><line x1="1096.0" y1="192.8" x2="1099.5" y2="192.4" stroke="#2a1a12" stroke-width="0.4"/><polygon points="1103.5,176.2 1104.6,176.0 1104.6,277.8 1103.5,277.6" fill="#b4582f" /><polygon points="1106.6,175.8 1107.5,175.7 1107.5,278.1 1106.6,278.0" fill="#ee875a" /><line x1="1103.5" y1="176.2" x2="1103.5" y2="277.6" stroke="#2a1a12" stroke-width="0.45"/><line x1="1107.5" y1="175.7" x2="1107.5" y2="278.1" stroke="#2a1a12" stroke-width="0.45"/><line x1="1103.5" y1="192.0" x2="1107.5" y2="191.7" stroke="#2a1a12" stroke-width="0.4"/><polygon points="1114.6,174.7 1115.8,174.5 1115.8,279.2 1114.6,279.1" fill="#b4582f" /><polygon points="1117.9,174.2 1118.8,174.1 1118.8,279.7 1117.9,279.5" fill="#ee875a" /><line x1="1114.6" y1="174.7" x2="1114.6" y2="279.1" stroke="#2a1a12" stroke-width="0.45"/><line x1="1118.8" y1="174.1" x2="1118.8" y2="279.7" stroke="#2a1a12" stroke-width="0.45"/><line x1="1114.6" y1="191.0" x2="1118.8" y2="190.6" stroke="#2a1a12" stroke-width="0.4"/><polygon points="1126.9,173.0 1128.0,172.8 1128.0,280.9 1126.9,280.7" fill="#b4582f" /><polygon points="1130.1,172.5 1131.0,172.4 1131.0,281.3 1130.1,281.2" fill="#ee875a" /><line x1="1126.9" y1="173.0" x2="1126.9" y2="280.7" stroke="#2a1a12" stroke-width="0.45"/><line x1="1131.0" y1="172.4" x2="1131.0" y2="281.3" stroke="#2a1a12" stroke-width="0.45"/><line x1="1126.9" y1="189.8" x2="1131.0" y2="189.4" stroke="#2a1a12" stroke-width="0.4"/><polygon points="1139.8,171.2 1141.0,171.1 1141.0,282.6 1139.8,282.5" fill="#b4582f" /><polygon points="1143.1,170.8 1144.0,170.6 1144.0,283.0 1143.1,282.9" fill="#ee875a" /><line x1="1139.8" y1="171.2" x2="1139.8" y2="282.5" stroke="#2a1a12" stroke-width="0.45"/><line x1="1144.0" y1="170.6" x2="1144.0" y2="283.0" stroke="#2a1a12" stroke-width="0.45"/><line x1="1139.8" y1="188.6" x2="1144.0" y2="188.2" stroke="#2a1a12" stroke-width="0.4"/><polygon points="1153.3,169.4 1154.6,169.2 1154.6,284.5 1153.3,284.3" fill="#b4582f" /><polygon points="1156.9,168.9 1157.9,168.7 1157.9,284.9 1156.9,284.8" fill="#ee875a" /><line x1="1153.3" y1="169.4" x2="1153.3" y2="284.3" stroke="#2a1a12" stroke-width="0.45"/><line x1="1157.9" y1="168.7" x2="1157.9" y2="284.9" stroke="#2a1a12" stroke-width="0.45"/><line x1="1153.3" y1="187.3" x2="1157.9" y2="186.9" stroke="#2a1a12" stroke-width="0.4"/><polygon points="1167.7,167.4 1169.1,167.2 1169.1,286.4 1167.7,286.2" fill="#b4582f" /><polygon points="1171.5,166.9 1172.6,166.7 1172.6,286.9 1171.5,286.7" fill="#ee875a" /><line x1="1167.7" y1="167.4" x2="1167.7" y2="286.2" stroke="#2a1a12" stroke-width="0.45"/><line x1="1172.6" y1="166.7" x2="1172.6" y2="286.9" stroke="#2a1a12" stroke-width="0.45"/><line x1="1167.7" y1="185.9" x2="1172.6" y2="185.5" stroke="#2a1a12" stroke-width="0.4"/><polygon points="1178.2,165.9 1180.5,165.6 1180.5,287.9 1178.2,287.6" fill="#b4582f" /><polygon points="1184.5,165.1 1186.3,164.8 1186.3,288.7 1184.5,288.5" fill="#ee875a" /><line x1="1178.2" y1="165.9" x2="1178.2" y2="287.6" stroke="#2a1a12" stroke-width="0.45"/><line x1="1186.3" y1="164.8" x2="1186.3" y2="288.7" stroke="#2a1a12" stroke-width="0.45"/><line x1="1178.2" y1="184.9" x2="1186.3" y2="184.2" stroke="#2a1a12" stroke-width="0.4"/><polygon points="1200.3,162.9 1202.0,162.7 1202.0,290.8 1200.3,290.6" fill="#b4582f" /><polygon points="1205.1,162.3 1206.4,162.1 1206.4,291.4 1205.1,291.2" fill="#ee875a" /><line x1="1200.3" y1="162.9" x2="1200.3" y2="290.6" stroke="#2a1a12" stroke-width="0.45"/><line x1="1206.4" y1="162.1" x2="1206.4" y2="291.4" stroke="#2a1a12" stroke-width="0.45"/><line x1="1200.3" y1="182.8" x2="1206.4" y2="182.3" stroke="#2a1a12" stroke-width="0.4"/><polygon points="1219.3,160.3 1220.8,160.1 1220.8,293.3 1219.3,293.1" fill="#b4582f" /><polygon points="1223.5,159.7 1224.7,159.6 1224.7,293.9 1223.5,293.7" fill="#ee875a" /><line x1="1219.3" y1="160.3" x2="1219.3" y2="293.1" stroke="#2a1a12" stroke-width="0.45"/><line x1="1224.7" y1="159.6" x2="1224.7" y2="293.9" stroke="#2a1a12" stroke-width="0.45"/><line x1="1219.3" y1="181.0" x2="1224.7" y2="180.5" stroke="#2a1a12" stroke-width="0.4"/><polygon points="1238.7,157.6 1240.5,157.4 1240.5,296.0 1238.7,295.7" fill="#b4582f" /><polygon points="1243.6,157.0 1245.0,156.8 1245.0,296.6 1243.6,296.4" fill="#ee875a" /><line x1="1238.7" y1="157.6" x2="1238.7" y2="295.7" stroke="#2a1a12" stroke-width="0.45"/><line x1="1245.0" y1="156.8" x2="1245.0" y2="296.6" stroke="#2a1a12" stroke-width="0.45"/><line x1="1238.7" y1="179.2" x2="1245.0" y2="178.6" stroke="#2a1a12" stroke-width="0.4"/><polygon points="1252.9,155.7 1254.8,155.4 1254.8,297.9 1252.9,297.6" fill="#b4582f" /><polygon points="1258.1,155.0 1259.6,154.8 1259.6,298.5 1258.1,298.3" fill="#ee875a" /><line x1="1252.9" y1="155.7" x2="1252.9" y2="297.6" stroke="#2a1a12" stroke-width="0.45"/><line x1="1259.6" y1="154.8" x2="1259.6" y2="298.5" stroke="#2a1a12" stroke-width="0.45"/><line x1="1252.9" y1="177.9" x2="1259.6" y2="177.2" stroke="#2a1a12" stroke-width="0.4"/><line x1="1275.5" y1="152.6" x2="1275.5" y2="300.7" stroke="#2a1a12" stroke-width="0.45"/><line x1="1295.0" y1="149.9" x2="1295.0" y2="303.3" stroke="#2a1a12" stroke-width="0.45"/><line x1="1275.5" y1="175.7" x2="1295.0" y2="173.9" stroke="#2a1a12" stroke-width="0.4"/><polygon points="1314.6,147.2 1316.7,146.9 1316.7,306.2 1314.6,305.9" fill="#b4582f" /><polygon points="1320.4,146.4 1322.0,146.2 1322.0,306.9 1320.4,306.7" fill="#ee875a" /><line x1="1314.6" y1="147.2" x2="1314.6" y2="305.9" stroke="#2a1a12" stroke-width="0.45"/><line x1="1322.0" y1="146.2" x2="1322.0" y2="306.9" stroke="#2a1a12" stroke-width="0.45"/><line x1="1314.6" y1="172.0" x2="1322.0" y2="171.3" stroke="#2a1a12" stroke-width="0.4"/><line x1="1332.5" y1="144.7" x2="1332.5" y2="308.3" stroke="#2a1a12" stroke-width="0.45"/><line x1="1352.5" y1="142.0" x2="1352.5" y2="311.0" stroke="#2a1a12" stroke-width="0.45"/><line x1="1332.5" y1="170.3" x2="1352.5" y2="168.4" stroke="#2a1a12" stroke-width="0.4"/><polygon points="1096.0,214.0 1352.5,204.5 1352.5,211.6 1096.0,218.2" fill="#fdfdf3" /><polygon points="1096.0,243.8 1352.5,255.2 1352.5,263.0 1096.0,248.4" fill="#fdfdf3" /><line x1="1096.0" y1="177.2" x2="1352.5" y2="142.0" stroke="#1a1210" stroke-width="0.9"/><line x1="1096.0" y1="276.6" x2="1352.5" y2="311.0" stroke="#15181a" stroke-width="0.8"/><polygon points="1357.4,143.0 1397.0,155.0 1397.0,299.0 1357.4,311.0" fill="#fb8b5f" /><polygon points="1394.1,103.5 1510.4,163.2 1510.4,191.5 1519.0,192.8 1519.0,262.1 1456.5,281.0 1394.1,299.9" fill="#fb8b5f" stroke="#1a1210" stroke-width="0.7" /><line x1="1357.4" y1="168.4" x2="1397.0" y2="176.8" stroke="#2a1a12" stroke-width="0.45"/><line x1="1394.1" y1="103.5" x2="1394.1" y2="176.2" stroke="#2a1a12" stroke-width="0.6"/><line x1="1397.6" y1="105.0" x2="1397.6" y2="176.9" stroke="#2a1a12" stroke-width="0.6"/><polygon points="1399.2,125.7 1408.9,129.9 1408.9,168.6 1399.2,166.1" fill="#0c0d0e" /><polygon points="1400.0,127.3 1408.1,130.8 1408.1,147.8 1400.0,145.0" fill="#3a3f42" /><polygon points="1413.0,131.7 1421.2,135.2 1421.2,171.8 1413.0,169.7" fill="#0c0d0e" /><polygon points="1413.8,133.2 1420.4,136.0 1420.4,152.1 1413.8,149.8" fill="#3a3f42" /><polygon points="1425.2,136.9 1432.0,139.8 1432.0,174.6 1425.2,172.9" fill="#0c0d0e" /><polygon points="1426.0,138.4 1431.2,140.6 1431.2,155.9 1426.0,154.1" fill="#3a3f42" /><line x1="1397.6" y1="169.1" x2="1438.5" y2="179.1" stroke="#2a1a12" stroke-width="0.45"/><polygon points="1399.0,170.3 1402.6,171.2 1402.6,206.9 1399.0,206.6" fill="#0c0d0e" /><polygon points="1399.0,216.5 1402.6,216.6 1402.6,248.9 1399.0,249.3" fill="#0c0d0e" /><polygon points="1399.0,261.9 1402.0,261.4 1402.0,295.8 1399.0,296.7" fill="#0c0d0e" /><polygon points="1412.5,173.6 1420.5,175.5 1420.5,208.5 1412.5,207.8" fill="#0c0d0e" /><polygon points="1413.2,176.1 1419.8,177.7 1419.8,207.3 1413.2,206.7" fill="#3a3f42" /><polygon points="1412.5,217.1 1420.5,217.4 1420.5,247.3 1412.5,248.0" fill="#0c0d0e" /><polygon points="1414.1,221.9 1418.9,222.0 1418.9,242.0 1414.1,242.3" fill="#c8b1a8" /><polygon points="1412.5,259.9 1416.3,259.3 1416.3,291.6 1412.5,292.7" fill="#0c0d0e" /><polygon points="1428.3,177.4 1432.6,178.4 1432.6,209.5 1428.3,209.2" fill="#0c0d0e" /><polygon points="1428.3,217.8 1432.6,218.0 1432.6,246.1 1428.3,246.5" fill="#0c0d0e" /><polygon points="1428.3,257.5 1432.0,257.0 1432.0,287.0 1428.3,288.0" fill="#0c0d0e" /><polygon points="1423.2,258.3 1425.0,258.0 1425.0,289.0 1423.2,289.6" fill="#0c0d0e" /><polygon points="1438.7,127.3 1445.0,130.5 1445.0,283.8 1438.7,285.7" fill="#3a3f42" /><polygon points="1439.2,170.2 1444.5,171.8 1444.5,196.5 1439.2,195.6" fill="#0c0d0e" /><polygon points="1439.2,220.4 1444.5,220.6 1444.5,244.3 1439.2,244.8" fill="#24282a" /><polygon points="1448.0,132.1 1453.4,134.8 1453.4,281.3 1448.0,282.9" fill="#3a3f42" /><polygon points="1448.5,172.9 1452.9,174.2 1452.9,197.8 1448.5,197.1" fill="#0c0d0e" /><polygon points="1448.5,220.7 1452.9,220.9 1452.9,243.5 1448.5,243.9" fill="#24282a" /><polygon points="1457.3,136.8 1461.4,138.9 1461.4,278.9 1457.3,280.1" fill="#3a3f42" /><polygon points="1457.8,175.6 1460.9,176.5 1460.9,199.1 1457.8,198.6" fill="#0c0d0e" /><polygon points="1457.8,221.0 1460.9,221.1 1460.9,242.8 1457.8,243.1" fill="#24282a" /><polygon points="1464.6,140.5 1468.8,142.7 1468.8,276.7 1464.6,277.9" fill="#3a3f42" /><polygon points="1465.1,177.8 1468.3,178.7 1468.3,200.3 1465.1,199.8" fill="#0c0d0e" /><polygon points="1465.1,221.3 1468.3,221.4 1468.3,242.2 1465.1,242.4" fill="#24282a" /><polygon points="1472.0,144.3 1475.4,146.0 1475.4,274.7 1472.0,275.7" fill="#3a3f42" /><polygon points="1472.5,179.9 1474.9,180.6 1474.9,201.4 1472.5,201.0" fill="#0c0d0e" /><polygon points="1472.5,221.5 1474.9,221.6 1474.9,241.6 1472.5,241.8" fill="#24282a" /><polygon points="1478.6,147.7 1481.7,149.2 1481.7,272.8 1478.6,273.7" fill="#3a3f42" /><polygon points="1479.1,181.8 1481.2,182.5 1481.2,202.4 1479.1,202.0" fill="#0c0d0e" /><polygon points="1479.1,221.8 1481.2,221.8 1481.2,241.0 1479.1,241.2" fill="#24282a" /><polygon points="1484.7,150.8 1487.6,152.2 1487.6,271.0 1484.7,271.9" fill="#3a3f42" /><polygon points="1485.2,183.6 1487.1,184.2 1487.1,203.3 1485.2,203.0" fill="#0c0d0e" /><polygon points="1485.2,222.0 1487.1,222.0 1487.1,240.5 1485.2,240.6" fill="#24282a" /><polygon points="1490.0,153.5 1493.2,155.1 1493.2,269.4 1490.0,270.3" fill="#3a3f42" /><polygon points="1490.5,185.2 1492.7,185.8 1492.7,204.2 1490.5,203.9" fill="#0c0d0e" /><polygon points="1490.5,222.2 1492.7,222.2 1492.7,239.9 1490.5,240.1" fill="#24282a" /><polygon points="1438.5,168.6 1494.0,185.2 1494.0,215.6 1438.5,211.1" fill="rgba(35,28,26,0.38)" /><polygon points="1438.5,216.1 1494.0,219.2 1494.0,241.3 1438.5,247.0" fill="rgba(35,28,26,0.45)" /><polygon points="1497.2,175.2 1500.4,176.4 1500.4,210.3 1497.2,209.9" fill="#0c0d0e" /><polygon points="1497.2,221.4 1500.4,221.5 1500.4,239.7 1497.2,240.0" fill="#0c0d0e" /><polygon points="1502.6,177.3 1505.4,178.3 1505.4,210.9 1502.6,210.6" fill="#0c0d0e" /><polygon points="1502.6,221.6 1505.4,221.7 1505.4,239.3 1502.6,239.5" fill="#0c0d0e" /><polygon points="1507.2,179.0 1509.4,179.8 1509.4,211.4 1507.2,211.2" fill="#0c0d0e" /><polygon points="1507.2,221.8 1509.4,221.9 1509.4,238.9 1507.2,239.1" fill="#0c0d0e" /><polygon points="1512.6,222.0 1515.0,222.1 1515.0,238.4 1512.6,238.6" fill="#0c0d0e" /><polygon points="1357.4,204.5 1519.0,217.7 1519.0,220.6 1357.4,211.6" fill="#fdfdf3" /><polygon points="1357.4,255.2 1519.0,238.8 1519.0,242.1 1357.4,263.0" fill="#fdfdf3" /><polygon points="1379.5,252.6 1421.0,248.4 1422.0,254.0 1393.0,260.2 1379.5,258.8" fill="#2f3436" stroke="#101213" stroke-width="0.5" /><polygon points="1490.0,244.2 1509.5,241.6 1509.5,245.0 1492.0,247.6" fill="#2f3436" stroke="#101213" stroke-width="0.4" /><polygon points="1438.0,253.3 1456.5,250.8 1456.5,281.0 1438.0,286.6" fill="#2a2e30" /><polygon points="1441.0,252.9 1443.2,252.6 1443.2,284.3 1441.0,285.0" fill="#fb8b5f" /><polygon points="1446.0,252.2 1448.2,251.9 1448.2,282.8 1446.0,283.5" fill="#fb8b5f" /><polygon points="1451.0,251.5 1453.2,251.2 1453.2,281.3 1451.0,282.0" fill="#fb8b5f" /><polygon points="1472.4,248.7 1519.0,242.5 1519.0,262.3 1472.4,276.5" fill="#fb8b5f" /><polygon points="1476.0,248.5 1478.4,248.2 1478.4,273.8 1476.0,274.5" fill="#2f3436" /><polygon points="1482.0,247.7 1484.4,247.4 1484.4,272.0 1482.0,272.7" fill="#2f3436" /><polygon points="1488.0,246.9 1490.4,246.5 1490.4,270.2 1488.0,270.9" fill="#2f3436" /><polygon points="1494.0,246.1 1496.4,245.7 1496.4,268.4 1494.0,269.1" fill="#2f3436" /><polygon points="1500.0,245.3 1502.4,244.9 1502.4,266.6 1500.0,267.3" fill="#2f3436" /><polygon points="1352.5,142.0 1357.4,143.0 1357.4,311.0 1352.5,311.0" fill="#e87c52" stroke="#2a1a12" stroke-width="0.5" /><polygon points="1352.5,204.5 1357.4,204.5 1357.4,211.6 1352.5,211.6" fill="#f4f4ea" /><polygon points="1352.5,255.2 1357.4,255.2 1357.4,263.0 1352.5,263.0" fill="#f4f4ea" /><line x1="1357.4" y1="311.0" x2="1456.5" y2="281.0" stroke="#15181a" stroke-width="0.8"/><polygon points="1461.6,249.0 1472.6,247.6 1472.6,279.4 1461.6,279.4" fill="#33373a" /><line x1="1467.0" y1="249.0" x2="1467.0" y2="279.4" stroke="#1d2022" stroke-width="0.8"/><line x1="1311.0" y1="217.0" x2="1311.0" y2="209.6" stroke="#2030ff" stroke-width="0.8"/><line x1="1311.0" y1="217.0" x2="1306.0" y2="217.0" stroke="#ff2020" stroke-width="0.8"/><line x1="1311.0" y1="217.0" x2="1317.0" y2="217.0" stroke="#20c020" stroke-width="0.8"/></svg>
<div style="position:absolute;left:941px;top:38px;width:32px;height:32px;background:#535353;"></div>
<svg class="i" style="left:945px;top:42px" width="24" height="24" viewBox="0 0 24 24" fill="none" stroke="#e2e2e2" stroke-width="1.5">
<path d="M0.75,7.6 V0.75 H8 M16,0.75 H23.25 V7.6 M23.25,16.4 V23.25 H16 M8,23.25 H0.75 V16.4"/>
<path d="M12,5 L18,8.5 V15.5 L12,19 L6,15.5 V8.5 Z" fill="#e2e2e2" stroke="none"/></svg>
<div style="position:absolute;left:944.4px;top:249.5px;width:92.6px;height:92.6px;border-radius:50%;background:#2f2b2b"></div>
<svg class="i" style="left:944px;top:249px" width="94" height="94" viewBox="944 249 94 94">
<line x1="990.7" y1="292" x2="990.7" y2="266" stroke="#0000ff" stroke-width="2.2"/><path d="M988,274.5 L990.7,266.5 L993.4,274.5 Z" fill="#0000ff"/>
<line x1="994" y1="296" x2="1009" y2="296" stroke="#00ff00" stroke-width="2"/><path d="M1007.8,293 L1016.8,296 L1007.8,299 Z" fill="#00ff00"/>
<line x1="988" y1="296" x2="973" y2="296" stroke="#ff0000" stroke-width="2"/><circle cx="977.5" cy="296" r="2.6" fill="#ff0000"/>
<circle cx="990.7" cy="296" r="4.2" fill="#a9a9a9"/><circle cx="989.6" cy="294.8" r="1.6" fill="#c4c4c4"/>
<text x="1023.4" y="296.6" font-size="10" fill="#00ff00" font-family="Liberation Sans, sans-serif">Y</text>
<text x="966" y="296.6" font-size="10" fill="#ff0000" font-family="Liberation Sans, sans-serif">X</text>
</svg>
<svg class="i" style="left:1675px;top:70px" width="90" height="90" viewBox="1675 70 90 90">
<polygon points="1681.8,85.3 1728,77.8 1728,149.2 1681.8,140.1" fill="#ffffff"/>
<polygon points="1729.8,77.8 1754.3,88 1754.3,138.1 1729.8,149.2" fill="#ffffff"/>
<g transform="translate(1689.2,121.3) scale(0.372,1)"><text x="0" y="0" font-size="21.6" fill="#808080" font-family="Liberation Sans, sans-serif">Справа</text></g>
<g transform="translate(1735.2,121.5) skewY(-1) scale(0.285,1)"><text x="0" y="0" font-size="21" fill="#8c8c8c" font-family="Liberation Sans, sans-serif">Сзади</text></g>
</svg>
<div style="position:absolute;left:1831px;top:0;width:3px;height:817px;background:linear-gradient(90deg,#2a2727,#0a0909 60%,#000)"></div>
<div style="position:absolute;left:1831px;top:609px;width:1px;height:8.4px;background:#5a3a1c;"></div>
<div style="position:absolute;left:1831.6px;top:610.6px;width:1.6px;height:1.4px;background:#e09a40;"></div>
<div style="position:absolute;left:1831.6px;top:615.6px;width:1.6px;height:1.4px;background:#e09a40;"></div>
<div style="position:absolute;left:941px;top:426px;width:846px;height:37px;background:#535353;border-radius:3px 3px 0 0"></div>
<div style="position:absolute;left:1364px;top:431.8px;width:42px;height:3px;background:#3a94b3;"></div>
<svg class="i" style="left:954.8px;top:439.8px" width="17" height="15" viewBox="0 0 17 15" fill="#e2e2e2"><rect x="0" y="0" width="13.2" height="2.1"/><rect x="0" y="4.1" width="13.2" height="2.1"/><rect x="0" y="8.2" width="8.9" height="2.1"/><path d="M11,8.3 L15.9,11.3 L11,14.2 Z"/></svg>
<div style="position:absolute;left:941px;top:463px;width:60px;height:32px;background:#ffffff;"></div>
<div style="position:absolute;left:1001px;top:463px;width:786px;height:31.6px;background:#676767;box-shadow:0 1px 1px rgba(0,0,0,.35)"></div>
<div style="position:absolute;left:1091px;top:463px;width:1px;height:31.6px;background:#585858;"></div>
<div style="position:absolute;left:1377.3px;top:463px;width:1px;height:31.6px;background:#585858;"></div>
<div style="position:absolute;left:1569.2px;top:463px;width:1px;height:31.6px;background:#585858;"></div>
<div style="position:absolute;left:941px;top:495px;width:846px;height:310px;background:#ffffff;"></div>
<div style="position:absolute;left:941px;top:494.4px;width:60px;height:1px;background:#dcdcdc;"></div>
<div style="position:absolute;left:959px;top:471px;width:11.2px;height:11.2px;background:#ffffff;border:2px solid #3a94b3;border-radius:3px"></div>
<div style="position:absolute;left:941px;top:805px;width:438px;height:8px;background:#3e93b1;"></div>
<div style="position:absolute;left:1379px;top:805px;width:408px;height:8px;background:#686868;"></div>
<svg class="i" style="left:1615px;top:435px" width="22" height="22" viewBox="1615 435 22 22" fill="none" stroke="#e2e2e2" stroke-width="1.7">
<rect x="1618" y="438" width="11.1" height="11.4" rx="2.4"/><rect x="1623.1" y="442.9" width="11.1" height="11.4" rx="2.4"/></svg>
<svg class="i" style="left:1652px;top:436px" width="18" height="22" viewBox="1652 436 18 22" fill="none" stroke="#e2e2e2" stroke-width="1.7">
<path d="M1654.1,439.8 H1667.9 M1654.1,454.9 H1667.9 M1661,443.4 V451.4"/>
<path d="M1658.2,445.6 L1661,442.6 L1663.8,445.6 M1658.2,449.2 L1661,452.2 L1663.8,449.2"/></svg>
<svg class="i" style="left:1686px;top:436px" width="18" height="22" viewBox="1686 436 18 22" fill="none" stroke="#e2e2e2" stroke-width="1.6">
<path d="M1688,446.9 H1702" stroke-width="3.3"/><path d="M1695,437.9 V442.6 M1695,456 V451.4"/>
<path d="M1692.2,440.3 L1695,443.1 L1697.8,440.3 M1692.2,453.8 L1695,451 L1697.8,453.8"/></svg>
<svg class="i" style="left:1718.6px;top:436.5px" width="20.8" height="20.8" viewBox="0 0 24 24" fill="#e2e2e2" ><path d="M12,15.5A3.5,3.5 0 0,1 8.5,12A3.5,3.5 0 0,1 12,8.5A3.5,3.5 0 0,1 15.5,12A3.5,3.5 0 0,1 12,15.5M19.43,12.97C19.47,12.65 19.5,12.33 19.5,12C19.5,11.67 19.47,11.34 19.43,11L21.54,9.37C21.73,9.22 21.78,8.95 21.66,8.73L19.66,5.27C19.54,5.05 19.27,4.96 19.05,5.05L16.56,6.05C16.04,5.66 15.5,5.32 14.87,5.07L14.5,2.42C14.46,2.18 14.25,2 14,2H10C9.75,2 9.54,2.18 9.5,2.42L9.13,5.07C8.5,5.32 7.96,5.66 7.44,6.05L4.95,5.05C4.73,4.96 4.46,5.05 4.34,5.27L2.34,8.73C2.21,8.95 2.27,9.22 2.46,9.37L4.57,11C4.53,11.34 4.5,11.67 4.5,12C4.5,12.33 4.53,12.65 4.57,12.97L2.46,14.63C2.27,14.78 2.21,15.05 2.34,15.27L4.34,18.73C4.46,18.95 4.73,19.03 4.95,18.95L7.44,17.94C7.96,18.34 8.5,18.68 9.13,18.93L9.5,21.58C9.54,21.82 9.75,22 10,22H14C14.25,22 14.46,21.82 14.5,21.58L14.87,18.93C15.5,18.67 16.04,18.34 16.56,17.94L19.05,18.95C19.27,19.03 19.54,18.95 19.66,18.73L21.66,15.27C21.78,15.05 21.73,14.78 21.54,14.63L19.43,12.97Z"/></svg>
<svg class="i" style="left:1752.3px;top:437.2px" width="21" height="21" viewBox="0 0 24 24" fill="#e2e2e2" ><path d="M7.41,8.58L12,13.17L16.59,8.58L18,10L12,16L6,10L7.41,8.58Z"/></svg>
<div style="position:absolute;left:1795px;top:38px;width:36px;height:773px;background:#535353;"></div>
<div style="position:absolute;left:1795px;top:130px;width:36px;height:1.2px;background:#403c3c;"></div>
<div style="position:absolute;left:1795px;top:399.2px;width:36px;height:1.2px;background:#403c3c;"></div>
<div style="position:absolute;left:1795px;top:448px;width:36px;height:1.2px;background:#403c3c;"></div>
<div style="position:absolute;left:1795px;top:629px;width:36px;height:1.2px;background:#403c3c;"></div>
<div style="position:absolute;left:1795px;top:722px;width:36px;height:1.2px;background:#403c3c;"></div>
<svg class="i" style="left:1795px;top:38px" width="36" height="773" viewBox="1795 38 36 773" fill="none" stroke="#e2e2e2" stroke-width="1.3" stroke-linejoin="round">
<!-- 1 cloud tree -->
<path d="M1809.4,67.4 H1806.4 A4.6,4.6 0 0 1 1806.6,58.3 A6.7,6.7 0 0 1 1819.9,58.3 A4.6,4.6 0 0 1 1820.2,67.4 H1817.4" stroke-width="1.4"/>
<path d="M1813.3,56.4 V72.8 M1813.3,63.2 L1809,59.6 M1813.3,66.4 L1817.6,62.6 M1813.3,61 L1815.8,58.6" stroke-width="1.3"/>
<!-- 2 monitor + fit -->
<path d="M1808.6,110.6 H1800.6 V93.6 H1823.5 V100.4 M1805.3,113.3 H1808.4 V111" stroke-width="1.2"/>
<path d="M1810.4,106.4 V102.9 H1814 M1822,102.9 H1825.6 V106.4 M1825.6,114.8 V118.4 H1822 M1814,118.4 H1810.4 V114.8" stroke-width="1.2"/>
<path d="M1818,106.2 L1822,108.5 V113.1 L1818,115.4 L1814,113.1 V108.5 Z" fill="#e2e2e2" stroke="none"/>
<!-- 3 ruler -->
<rect x="1800.6" y="150.2" width="25" height="8.4" stroke-width="1.3"/><rect x="1800" y="160.2" width="26.2" height="1.9" fill="#e2e2e2" stroke="none"/>
<path d="M1804,158 V154.6 M1806.6,158 V156 M1809.3,158 V154.6 M1812,158 V156 M1814.9,158 V154.6 M1817.6,158 V156 M1820.4,158 V154.6 M1823,158 V156" stroke-width="1.2"/>
<!-- 4 section planes -->
<path d="M1808.4,193.1 L1817.9,185.2 V205 L1808.4,213.1 Z" fill="#e2e2e2" stroke="none"/>
<path d="M1799.8,201.3 L1808.4,195.6 H1826.4 L1817.9,201.3 Z" stroke-width="1"/>
<!-- 5 box section -->
<g stroke-width="0.9"><rect x="1801.3" y="237.8" width="16.9" height="15.5"/><rect x="1808" y="232.3" width="16.9" height="15.6"/>
<path d="M1801.3,237.8 L1808,232.3 M1818.2,237.8 L1824.9,232.3 M1818.2,253.3 L1824.9,247.9 M1801.3,253.3 L1808,247.9"/></g>
<path d="M1810.6,238 L1816.6,233 V248.4 L1810.6,253.2 Z" fill="#e2e2e2" stroke="none"/>
<!-- 6 plan -->
<path d="M1802,276.3 H1825 V295.3 H1799.6 V278.7 Z" stroke-width="1.1"/>
<path d="M1826,277.6 V296.6 H1801.4" stroke-width="2"/>
<path d="M1811.8,276.6 V295 M1800,285.3 H1824.6" stroke-width="1" stroke-dasharray="2.6 1.1 0.9 1.1"/>
<rect x="1818.4" y="293" width="5.8" height="1.9" stroke-width="0.9"/>
<!-- 8 flag -->
<circle cx="1813" cy="375" r="12.9" stroke-width="1"/>
<path d="M1807.5,382.1 V368.9 Q1811.4,367.8 1814.2,369.4 Q1817.4,371 1820.6,370.4 V377.2 Q1817.4,377.8 1814.2,376.2 Q1811.4,374.8 1807.5,375.8" stroke-width="1.1"/>
<!-- 9 grid -->
<g stroke-width="1" stroke="#e8e8e8"><path d="M1798,428.1 L1828,411 M1798.3,437.9 L1827.4,421.5 M1799.2,422.4 L1817.9,432.5 M1807.8,416.2 L1826.8,426.6"/></g>
<text x="1797.9" y="421" font-size="5.6" font-weight="700" fill="#f0f0f0" stroke="none" font-family="Liberation Sans, sans-serif">1</text>
<text x="1808.2" y="414.6" font-size="5.6" font-weight="700" fill="#f0f0f0" stroke="none" font-family="Liberation Sans, sans-serif">2</text>
<!-- 10 dashed cube -->
<rect x="1801.5" y="461.4" width="23.4" height="23.4" fill="none" stroke="#f4f4f4" stroke-width="1.1" stroke-dasharray="1.5 1.43"/>
<path d="M1813,466.4 L1818.9,469.7 V476.4 L1813,479.8 L1807.1,476.4 V469.7 Z M1807.1,469.7 L1813,473.1 L1818.9,469.7 M1813,473.1 V479.8" stroke-width="1"/>
<!-- 11, 12 dashed eyes -->
<rect x="1801.5" y="505.3" width="23.4" height="23.4" fill="none" stroke="#f4f4f4" stroke-width="1.1" stroke-dasharray="1.5 1.43"/><rect x="1801.5" y="549.4" width="23.4" height="23.4" fill="none" stroke="#f4f4f4" stroke-width="1.1" stroke-dasharray="1.5 1.43"/>
<!-- 13 dashed X -->
<rect x="1801.5" y="593.2" width="23.4" height="23.4" fill="none" stroke="#f4f4f4" stroke-width="1.1" stroke-dasharray="1.5 1.43"/>
<rect x="1810.9" y="603.2" width="15.9" height="15.6" fill="#e2e2e2" stroke="none"/>
<path d="M1814.6,606.8 L1823,615.2 M1823,606.8 L1814.6,615.2" stroke="#3e3e3e" stroke-width="1.1"/>
<!-- 14 cube -->
<rect x="1797" y="638" width="32" height="32" fill="#858585" stroke="none"/>
<path d="M1801.1,644.8 L1813.1,649.9 V665.8 L1803.7,659.3 Z" fill="#e2e2e2" stroke="none"/>
<path d="M1801.1,644.8 L1813.1,643.1 L1824.8,644.8 L1813.1,649.9 Z" fill="#747474" stroke="#e2e2e2" stroke-width="0.8"/>
<path d="M1813.1,649.9 L1824.8,644.8 L1822.5,659.3 L1813.1,665.8 Z" fill="#787878" stroke="#e2e2e2" stroke-width="0.8"/>
<!-- 15 orbit -->
<rect x="1797" y="682" width="32" height="32" fill="#858585" stroke="none"/>
<ellipse cx="1813.1" cy="697.9" rx="11.3" ry="5.3" stroke-width="1.8"/><ellipse cx="1813.1" cy="697.9" rx="4.7" ry="10.2" stroke-width="1.8"/>
<path d="M1813.1,695.4 V698.4 L1810.6,700.8 M1813.1,698.4 L1815.6,700.8" stroke-width="0.8"/>
<!-- corner grip -->
<path d="M1796.9,804.6 L1801.4,809 H1796.9 Z" fill="#ffffff" stroke="none"/>
</svg>
<svg class="i" style="left:1800.9px;top:319px" width="24.2" height="24.2" viewBox="0 0 24 24" fill="#e2e2e2" ><path d="M12,8A4,4 0 0,1 16,12A4,4 0 0,1 12,16A4,4 0 0,1 8,12A4,4 0 0,1 12,8M3.05,13H1V11H3.05C3.5,6.83 6.83,3.5 11,3.05V1H13V3.05C17.17,3.5 20.5,6.83 20.95,11H23V13H20.95C20.5,17.17 17.17,20.5 13,20.95V23H11V20.95C6.83,20.5 3.5,17.17 3.05,13M12,5A7,7 0 0,0 5,12A7,7 0 0,0 12,19A7,7 0 0,0 19,12A7,7 0 0,0 12,5Z"/></svg>
<svg class="i" style="left:1805px;top:509px" width="16" height="16" viewBox="0 0 24 24" fill="#e2e2e2" ><path d="M12,9A3,3 0 0,0 9,12A3,3 0 0,0 12,15A3,3 0 0,0 15,12A3,3 0 0,0 12,9M12,17A5,5 0 0,1 7,12A5,5 0 0,1 12,7A5,5 0 0,1 17,12A5,5 0 0,1 12,17M12,4.5C7,4.5 2.73,7.61 1,12C2.73,16.39 7,19.5 12,19.5C17,19.5 21.27,16.39 23,12C21.27,7.61 17,4.5 12,4.5Z"/></svg>
<svg class="i" style="left:1805px;top:553.1px" width="16" height="16" viewBox="0 0 24 24" fill="#e2e2e2" ><path d="M11.83,9L15,12.16C15,12.11 15,12.05 15,12A3,3 0 0,0 12,9C11.94,9 11.89,9 11.83,9M7.53,9.8L9.08,11.35C9.03,11.56 9,11.77 9,12A3,3 0 0,0 12,15C12.22,15 12.44,14.97 12.65,14.92L14.2,16.47C13.53,16.8 12.79,17 12,17A5,5 0 0,1 7,12C7,11.21 7.2,10.47 7.53,9.8M2,4.27L4.28,6.55L4.73,7C3.08,8.3 1.78,10 1,12C2.73,16.39 7,19.5 12,19.5C13.55,19.5 15.03,19.2 16.38,18.66L16.81,19.08L19.73,22L21,20.73L3.27,3M12,7A5,5 0 0,1 17,12C17,12.64 16.87,13.26 16.64,13.82L19.57,16.75C21.07,15.5 22.27,13.86 23,12C21.27,7.61 17,4.5 12,4.5C10.6,4.5 9.26,4.75 8,5.2L10.17,7.35C10.74,7.13 11.35,7 12,7Z"/></svg>
<span class="t" style="left:452.70px;top:8.15px;font-size:14px;font-weight:400;color:#ffffff;letter-spacing:-0.330px;">Базовое пространство</span>
<span class="t" style="left:1008.40px;top:4.66px;font-size:18px;font-weight:400;color:#dedede;letter-spacing:0.256px;">Школа.</span>
<span class="t" style="left:116.50px;top:57.90px;font-size:15px;font-weight:400;color:#f0f0f0;letter-spacing:1.155px;">Настройки</span>
<span class="t" style="left:230.90px;top:57.90px;font-size:15px;font-weight:400;color:#9a9a9a;letter-spacing:1.160px;">Коллизии</span>
<span class="t" style="left:337.70px;top:57.90px;font-size:15px;font-weight:400;color:#9a9a9a;letter-spacing:1.071px;">Проверки</span>
<span class="t" style="left:74.30px;top:98.55px;font-size:14px;font-weight:700;color:#e6e6e6;letter-spacing:-0.421px;">Дерево правил</span>
<span class="t" style="left:92.50px;top:135.34px;font-size:10px;font-weight:400;color:#3a94b3;letter-spacing:1.033px;-webkit-text-stroke:0.25px #3a94b3">Развернуть дерево</span>
<span class="t" style="left:367.70px;top:135.34px;font-size:10px;font-weight:400;color:#3a94b3;letter-spacing:1.036px;-webkit-text-stroke:0.25px #3a94b3">Сбросить всё</span>
<span class="t" style="left:91.80px;top:154.84px;font-size:12px;font-weight:700;color:#111111;letter-spacing:-0.409px;">Группа коллизий</span>
<span class="t" style="left:99.70px;top:178.84px;font-size:12px;font-weight:400;color:#3a94b3;letter-spacing:-0.501px;">AP_BK</span>
<span class="t" style="left:91.80px;top:202.84px;font-size:12px;font-weight:700;color:#9a9a9a;letter-spacing:-0.405px;">Группа проверок</span>
<span class="t" style="left:412.00px;top:156.76px;font-size:9.5px;font-weight:400;color:#333333;letter-spacing:-0.159px;">SHARED</span>
<span class="t" style="left:412.00px;top:180.76px;font-size:9.5px;font-weight:400;color:#333333;letter-spacing:-0.159px;">SHARED</span>
<span class="t" style="left:412.00px;top:204.76px;font-size:9.5px;font-weight:400;color:#333333;letter-spacing:-0.159px;">SHARED</span>
<span class="t" style="left:509.90px;top:98.55px;font-size:14px;font-weight:700;color:#e6e6e6;letter-spacing:-0.669px;">Настройка правила &quot;AP_BK&quot;</span>
<span class="t" style="left:508.00px;top:137.84px;font-size:12px;font-weight:400;color:#333333;letter-spacing:0.107px;">Выборка элементов 1</span>
<span class="t" style="left:696.50px;top:137.84px;font-size:12px;font-weight:400;color:#333333;letter-spacing:0.135px;">Выборка элементов 2</span>
<span class="t" style="left:515.90px;top:161.35px;font-size:14px;font-weight:400;color:#5a5a5a;letter-spacing:0.012px;">AP</span>
<span class="t" style="left:704.40px;top:161.35px;font-size:14px;font-weight:400;color:#5a5a5a;letter-spacing:-0.188px;">BK</span>
<span class="t" style="left:508.00px;top:197.84px;font-size:12px;font-weight:400;color:#333333;letter-spacing:0.354px;">Исключения</span>
<span class="t" style="left:510.00px;top:468.35px;font-size:14px;font-weight:700;color:#e6e6e6;letter-spacing:-0.371px;">Параметры передачи элементов в подправила</span>
<span class="t" style="left:510.00px;top:506.45px;font-size:14px;font-weight:700;color:#e6e6e6;letter-spacing:-0.274px;">Просмотр элементов</span>
<span class="t" style="left:507.70px;top:546.24px;font-size:12px;font-weight:400;color:#333333;letter-spacing:0.086px;">Всего элементов: 0</span>
<span class="t" style="left:785.40px;top:548.83px;font-size:10px;font-weight:400;color:#3a94b3;letter-spacing:0.536px;-webkit-text-stroke:0.25px #3a94b3">СБРОСИТЬ ВСЁ</span>
<span class="t" style="left:984.80px;top:440.15px;font-size:14px;font-weight:400;color:#e6e6e6;letter-spacing:0.211px;">Коллизии (количество: 0)</span>
<span class="t" style="left:1017.30px;top:472.84px;font-size:12px;font-weight:700;color:#e6e6e6;letter-spacing:-0.151px;">Статус</span>
<span class="t" style="left:1106.90px;top:472.84px;font-size:12px;font-weight:700;color:#e6e6e6;letter-spacing:-0.199px;">Элемент (Модель A)</span>
<span class="t" style="left:1393.00px;top:472.84px;font-size:12px;font-weight:700;color:#e6e6e6;letter-spacing:-0.217px;">Элемент (Модель B)</span>
<span class="t" style="left:1585.00px;top:472.84px;font-size:12px;font-weight:700;color:#e6e6e6;letter-spacing:-0.277px;">GUID элемента (Модель A)</span>
<span class="t" style="left:1609.60px;top:503.75px;font-size:14px;font-weight:400;color:#9c9c9c;letter-spacing:0.159px;">Отсутствуют данные</span>
<div style="position:absolute;left:901px;top:171px;width:214px;height:99px;background:#f0f0f0;box-shadow:0 5px 5px -3px rgba(0,0,0,.3),0 8px 10px 1px rgba(0,0,0,.2),0 3px 14px 2px rgba(0,0,0,.18);border-radius:1px"><div style="position:absolute;left:0;top:49.5px;width:214px;height:49.5px;background:#cfcfcf"></div></div>
<span class="t" style="left:916.80px;top:188.90px;font-size:13px;font-weight:400;color:#222222;letter-spacing:-0.375px;">Настройки поиска пересечений</span>
<span class="t" style="left:916.80px;top:236.90px;font-size:13px;font-weight:400;color:#222222;letter-spacing:-0.471px;">Очистить</span>
<svg class="i" style="left:800px;top:150px;filter:drop-shadow(4px 4px 2.2px rgba(0,0,0,.42))" width="120" height="130" viewBox="800 150 120 130">
<g stroke="#c00000" stroke-width="2.9" fill="#c00000" stroke-linejoin="miter">
<path d="M817.6,263.6 L883.6,180" fill="none"/>
<path d="M890.6,170 L875.8,176.6 L888.2,185.8 Z" stroke-width="0.6"/>
<path d="M821.4,260.6 L888,248.2" fill="none"/>
<path d="M901.7,243.6 L885.8,239.2 L888.6,253.6 Z" stroke-width="0.6"/>
</g></svg>
</body></html>
